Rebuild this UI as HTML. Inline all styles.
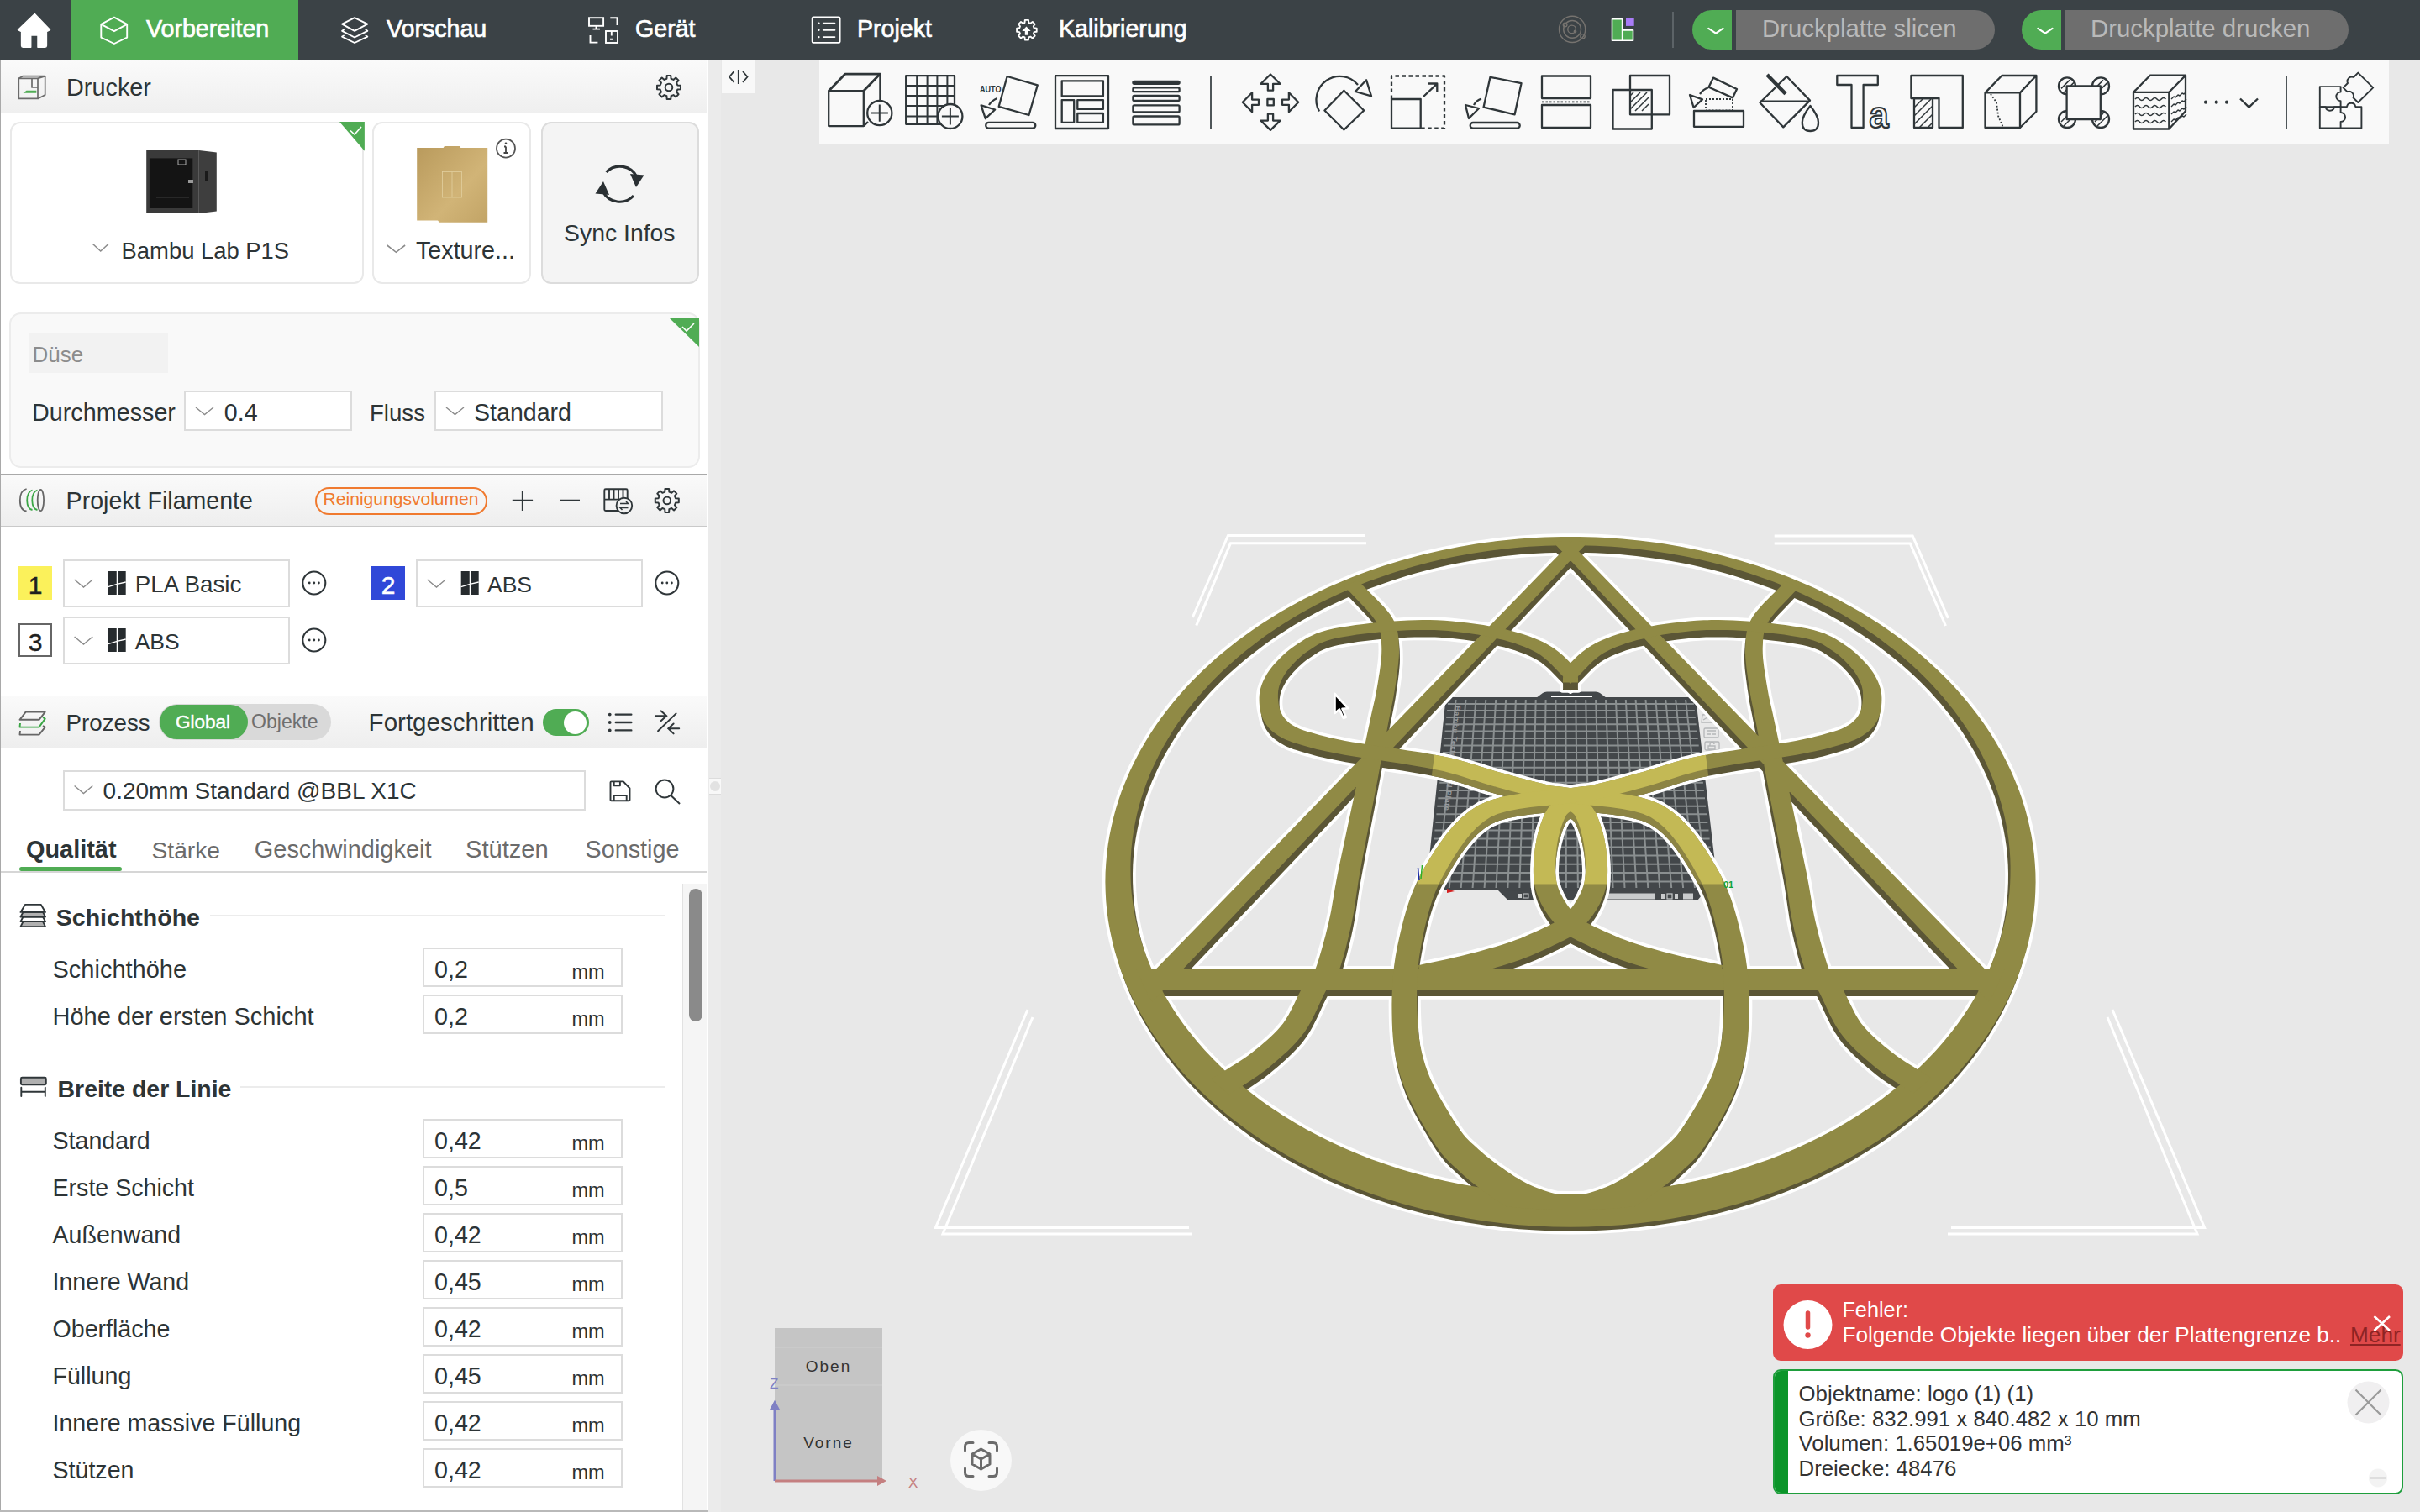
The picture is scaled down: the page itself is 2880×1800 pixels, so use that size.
<!DOCTYPE html>
<html><head><meta charset="utf-8"><style>
html,body{margin:0;padding:0;width:2880px;height:1800px;overflow:hidden;background:#e8e8e8;font-family:"Liberation Sans",sans-serif;}
.t{position:absolute;white-space:pre;-webkit-font-smoothing:antialiased;}
.r{position:absolute;}
.s{position:absolute;overflow:visible;}
</style></head><body>
<div class="r" style="left:0px;top:0px;width:2880px;height:1800px;background:#e8e8e8;"></div>
<div class="r" style="left:0px;top:0px;width:2880px;height:72px;background:#3b4246;"></div>
<div class="r" style="left:84px;top:0px;width:271px;height:72px;background:#50ac54;"></div>
<div class="t" style="left:174.0px;top:20.1px;font-size:28.6px;line-height:28.6px;color:#ffffff;font-weight:normal;-webkit-text-stroke:0.7px #ffffff;">Vorbereiten</div>
<div class="t" style="left:460.0px;top:20.1px;font-size:28.6px;line-height:28.6px;color:#ffffff;font-weight:normal;-webkit-text-stroke:0.7px #ffffff;">Vorschau</div>
<div class="t" style="left:756.0px;top:20.1px;font-size:28.6px;line-height:28.6px;color:#ffffff;font-weight:normal;-webkit-text-stroke:0.7px #ffffff;">Gerät</div>
<div class="t" style="left:1020.0px;top:20.1px;font-size:28.6px;line-height:28.6px;color:#ffffff;font-weight:normal;-webkit-text-stroke:0.7px #ffffff;">Projekt</div>
<div class="t" style="left:1260.0px;top:20.1px;font-size:28.6px;line-height:28.6px;color:#ffffff;font-weight:normal;-webkit-text-stroke:0.7px #ffffff;">Kalibrierung</div>
<div class="r" style="left:2014px;top:12px;width:80px;height:47px;background:#50ac54;border-radius:23.5px;"></div>
<div class="r" style="left:2066px;top:12px;width:308px;height:47px;background:#6e6e6e;border-radius:0 23.5px 23.5px 0;"></div>
<div class="r" style="left:2061px;top:12px;width:5px;height:47px;background:#3b4246;"></div>
<div class="t" style="left:2097.0px;top:19.0px;font-size:29.35px;line-height:29.35px;color:#b9b9b9;font-weight:normal;">Druckplatte slicen</div>
<div class="r" style="left:2406px;top:12px;width:80px;height:47px;background:#50ac54;border-radius:23.5px;"></div>
<div class="r" style="left:2458px;top:12px;width:337px;height:47px;background:#6e6e6e;border-radius:0 23.5px 23.5px 0;"></div>
<div class="r" style="left:2453px;top:12px;width:5px;height:47px;background:#3b4246;"></div>
<div class="t" style="left:2488.0px;top:18.9px;font-size:29.4px;line-height:29.4px;color:#b9b9b9;font-weight:normal;">Druckplatte drucken</div>
<div class="r" style="left:1990px;top:14px;width:2px;height:43px;background:#5c6367;"></div>
<div class="r" style="left:0px;top:72px;width:842px;height:1728px;background:#ffffff;"></div>
<div class="r" style="left:0px;top:72px;width:1px;height:1728px;background:#a9a9a9;"></div>
<div class="r" style="left:842px;top:72px;width:1px;height:1728px;background:#a3a3a3;"></div>
<div class="r" style="left:843px;top:72px;width:15px;height:1728px;background:#ebebeb;"></div>
<div class="r" style="left:844px;top:926px;width:14px;height:20px;background:#f8f8f8;"></div>
<div class="r" style="left:844px;top:926px;width:14px;height:1px;background:#dcdcdc;"></div>
<div class="r" style="left:844px;top:945px;width:14px;height:1px;background:#dcdcdc;"></div>
<div class="r" style="left:845px;top:930px;width:12px;height:12px;background:#e2e2e2;border-radius:6px;"></div>
<div class="r" style="left:1px;top:72px;width:840px;height:62px;background:linear-gradient(#fafafa,#efefef);"></div>
<div class="r" style="left:1px;top:134px;width:840px;height:1px;background:#b5b5b5;"></div>
<div class="t" style="left:79.0px;top:89.6px;font-size:28.85px;line-height:28.85px;color:#2d3436;font-weight:normal;">Drucker</div>
<div class="r" style="left:12px;top:145px;width:421px;height:193px;background:#ffffff;box-sizing:border-box;border:2px solid #e9e9e9;border-radius:12px;"></div>
<div class="r" style="left:443px;top:145px;width:189px;height:193px;background:#ffffff;box-sizing:border-box;border:2px solid #e9e9e9;border-radius:12px;"></div>
<div class="r" style="left:644px;top:145px;width:188px;height:193px;background:#f4f4f4;box-sizing:border-box;border:2px solid #dcdcdc;border-radius:12px;"></div>
<div class="t" style="left:144.6px;top:284.8px;font-size:27.4px;line-height:27.4px;color:#2d3436;font-weight:normal;">Bambu Lab P1S</div>
<div class="t" style="left:495.0px;top:283.7px;font-size:28.7px;line-height:28.7px;color:#2d3436;font-weight:normal;">Texture...</div>
<div class="t" style="left:671.0px;top:263.0px;font-size:28.4px;line-height:28.4px;color:#2d3436;font-weight:normal;">Sync Infos</div>
<div class="r" style="left:11px;top:372px;width:822px;height:185px;background:#f9f9f9;box-sizing:border-box;border:2px solid #ececec;border-radius:14px;"></div>
<div class="r" style="left:34px;top:396px;width:166px;height:48px;background:#f2f2f2;"></div>
<div class="t" style="left:38.6px;top:409.0px;font-size:26px;line-height:26px;color:#8c8c8c;font-weight:normal;">Düse</div>
<div class="t" style="left:38.0px;top:476.7px;font-size:28.76px;line-height:28.76px;color:#2d3436;font-weight:normal;">Durchmesser</div>
<div class="r" style="left:219px;top:465px;width:200px;height:48px;background:#ffffff;box-sizing:border-box;border:2px solid #dcdcdc;"></div>
<div class="t" style="left:266.8px;top:476.8px;font-size:28.6px;line-height:28.6px;color:#2d3436;font-weight:normal;">0.4</div>
<div class="t" style="left:440.0px;top:477.6px;font-size:27.6px;line-height:27.6px;color:#2d3436;font-weight:normal;">Fluss</div>
<div class="r" style="left:517px;top:465px;width:272px;height:48px;background:#ffffff;box-sizing:border-box;border:2px solid #dcdcdc;"></div>
<div class="t" style="left:564.0px;top:476.8px;font-size:28.58px;line-height:28.58px;color:#2d3436;font-weight:normal;">Standard</div>
<div class="r" style="left:1px;top:564px;width:840px;height:1px;background:#a9a9a9;"></div>
<div class="r" style="left:1px;top:565px;width:840px;height:61px;background:linear-gradient(#fafafa,#eeeeee);"></div>
<div class="r" style="left:1px;top:626px;width:840px;height:1px;background:#c9c9c9;"></div>
<div class="t" style="left:78.6px;top:581.8px;font-size:28.58px;line-height:28.58px;color:#2d3436;font-weight:normal;">Projekt Filamente</div>
<div class="r" style="left:375px;top:580px;width:205px;height:33px;background:#f4f4f4;box-sizing:border-box;border:2px solid #f07a2f;border-radius:16.5px;"></div>
<div class="t" style="left:384.6px;top:583.2px;font-size:21.06px;line-height:21.06px;color:#f07a2f;font-weight:normal;">Reinigungsvolumen</div>
<div class="r" style="left:22px;top:674px;width:40px;height:40px;background:#fbf15b;"></div>
<div class="t" style="left:-458.0px;width:1000px;text-align:center;top:681.6px;font-size:30px;line-height:30px;color:#1f1f1f;font-weight:normal;-webkit-text-stroke:0.5px #1f1f1f;">1</div>
<div class="r" style="left:75px;top:666px;width:270px;height:57px;background:#ffffff;box-sizing:border-box;border:2px solid #dcdcdc;"></div>
<div class="t" style="left:160.7px;top:682.2px;font-size:27.8px;line-height:27.8px;color:#2d3436;font-weight:normal;">PLA Basic</div>
<div class="r" style="left:442px;top:674px;width:40px;height:40px;background:#3048d8;"></div>
<div class="t" style="left:-38.0px;width:1000px;text-align:center;top:681.6px;font-size:30px;line-height:30px;color:#ffffff;font-weight:normal;-webkit-text-stroke:0.5px #ffffff;">2</div>
<div class="r" style="left:495px;top:666px;width:270px;height:57px;background:#ffffff;box-sizing:border-box;border:2px solid #dcdcdc;"></div>
<div class="t" style="left:580.0px;top:683.3px;font-size:26.5px;line-height:26.5px;color:#2d3436;font-weight:normal;">ABS</div>
<div class="r" style="left:22px;top:742px;width:40px;height:40px;background:#ffffff;box-sizing:border-box;border:2px solid #666666;"></div>
<div class="t" style="left:-458.0px;width:1000px;text-align:center;top:749.6px;font-size:30px;line-height:30px;color:#1f1f1f;font-weight:normal;-webkit-text-stroke:0.5px #1f1f1f;">3</div>
<div class="r" style="left:75px;top:734px;width:270px;height:57px;background:#ffffff;box-sizing:border-box;border:2px solid #dcdcdc;"></div>
<div class="t" style="left:160.7px;top:751.3px;font-size:26.5px;line-height:26.5px;color:#2d3436;font-weight:normal;">ABS</div>
<div class="r" style="left:1px;top:828px;width:840px;height:1px;background:#a9a9a9;"></div>
<div class="r" style="left:1px;top:829px;width:840px;height:61px;background:linear-gradient(#fafafa,#eeeeee);"></div>
<div class="r" style="left:1px;top:890px;width:840px;height:1px;background:#c9c9c9;"></div>
<div class="t" style="left:78.6px;top:846.6px;font-size:27.7px;line-height:27.7px;color:#2d3436;font-weight:normal;">Prozess</div>
<div class="r" style="left:188.6px;top:838px;width:205.4px;height:43px;background:#d9d9d9;border-radius:21.5px;"></div>
<div class="r" style="left:190px;top:839px;width:105px;height:41px;background:#50ac54;border-radius:20.5px;"></div>
<div class="t" style="left:209.0px;top:849.0px;font-size:22.5px;line-height:22.5px;color:#ffffff;font-weight:normal;-webkit-text-stroke:0.5px #ffffff;">Global</div>
<div class="t" style="left:299.0px;top:848.4px;font-size:23.1px;line-height:23.1px;color:#6f6f6f;font-weight:normal;">Objekte</div>
<div class="t" style="left:438.6px;top:845.0px;font-size:29.56px;line-height:29.56px;color:#2d3436;font-weight:normal;">Fortgeschritten</div>
<div class="r" style="left:645.7px;top:844px;width:55px;height:32px;background:#50ac54;border-radius:16px;"></div>
<div class="r" style="left:671px;top:847px;width:27px;height:27px;background:#ffffff;border-radius:13.5px;"></div>
<div class="r" style="left:75px;top:917px;width:622px;height:48px;background:#ffffff;box-sizing:border-box;border:2px solid #dcdcdc;"></div>
<div class="t" style="left:122.6px;top:928.3px;font-size:28.02px;line-height:28.02px;color:#2d3436;font-weight:normal;">0.20mm Standard @BBL X1C</div>
<div class="t" style="left:31.0px;top:996.9px;font-size:28.9px;line-height:28.9px;color:#2d3436;font-weight:bold;">Qualität</div>
<div class="t" style="left:180.5px;top:997.5px;font-size:28.2px;line-height:28.2px;color:#6b6b6b;font-weight:normal;">Stärke</div>
<div class="t" style="left:302.8px;top:996.9px;font-size:28.94px;line-height:28.94px;color:#6b6b6b;font-weight:normal;">Geschwindigkeit</div>
<div class="t" style="left:554.0px;top:996.7px;font-size:29.14px;line-height:29.14px;color:#6b6b6b;font-weight:normal;">Stützen</div>
<div class="t" style="left:696.5px;top:997.0px;font-size:28.78px;line-height:28.78px;color:#6b6b6b;font-weight:normal;">Sonstige</div>
<div class="r" style="left:23px;top:1032px;width:122px;height:5px;background:#50ac54;border-radius:2.5px;"></div>
<div class="r" style="left:1px;top:1037px;width:840px;height:2px;background:#d6d6d6;"></div>
<div class="r" style="left:812px;top:1052px;width:29px;height:748px;background:#f5f5f5;"></div>
<div class="r" style="left:812px;top:1052px;width:1px;height:748px;background:#e2e2e2;"></div>
<div class="r" style="left:820px;top:1058px;width:16px;height:158px;background:#8a8a8a;border-radius:8px;"></div>
<div class="t" style="left:66.8px;top:1077.8px;font-size:28.53px;line-height:28.53px;color:#2d3436;font-weight:bold;">Schichthöhe</div>
<div class="r" style="left:250px;top:1089px;width:542px;height:2px;background:#ececec;"></div>
<div class="t" style="left:62.5px;top:1139.5px;font-size:29.0px;line-height:29.0px;color:#2d3436;font-weight:normal;">Schichthöhe</div>
<div class="r" style="left:503px;top:1128px;width:238px;height:47px;background:#ffffff;box-sizing:border-box;border:2px solid #dcdcdc;"></div>
<div class="t" style="left:517.0px;top:1139.7px;font-size:28.67px;line-height:28.67px;color:#2d3436;font-weight:normal;">0,2</div>
<div class="t" style="left:680.5px;top:1146.1px;font-size:23.5px;line-height:23.5px;color:#2d3436;font-weight:normal;">mm</div>
<div class="t" style="left:62.5px;top:1195.5px;font-size:29.0px;line-height:29.0px;color:#2d3436;font-weight:normal;">Höhe der ersten Schicht</div>
<div class="r" style="left:503px;top:1184px;width:238px;height:47px;background:#ffffff;box-sizing:border-box;border:2px solid #dcdcdc;"></div>
<div class="t" style="left:517.0px;top:1195.7px;font-size:28.67px;line-height:28.67px;color:#2d3436;font-weight:normal;">0,2</div>
<div class="t" style="left:680.5px;top:1202.1px;font-size:23.5px;line-height:23.5px;color:#2d3436;font-weight:normal;">mm</div>
<div class="t" style="left:68.6px;top:1281.7px;font-size:28.41px;line-height:28.41px;color:#2d3436;font-weight:bold;">Breite der Linie</div>
<div class="r" style="left:286px;top:1293px;width:506px;height:2px;background:#ececec;"></div>
<div class="t" style="left:62.5px;top:1343.8px;font-size:28.6px;line-height:28.6px;color:#2d3436;font-weight:normal;">Standard</div>
<div class="r" style="left:503px;top:1332px;width:238px;height:47px;background:#ffffff;box-sizing:border-box;border:2px solid #dcdcdc;"></div>
<div class="t" style="left:517.0px;top:1343.7px;font-size:28.67px;line-height:28.67px;color:#2d3436;font-weight:normal;">0,42</div>
<div class="t" style="left:680.5px;top:1350.1px;font-size:23.5px;line-height:23.5px;color:#2d3436;font-weight:normal;">mm</div>
<div class="t" style="left:62.5px;top:1399.8px;font-size:28.6px;line-height:28.6px;color:#2d3436;font-weight:normal;">Erste Schicht</div>
<div class="r" style="left:503px;top:1388px;width:238px;height:47px;background:#ffffff;box-sizing:border-box;border:2px solid #dcdcdc;"></div>
<div class="t" style="left:517.0px;top:1399.7px;font-size:28.67px;line-height:28.67px;color:#2d3436;font-weight:normal;">0,5</div>
<div class="t" style="left:680.5px;top:1406.1px;font-size:23.5px;line-height:23.5px;color:#2d3436;font-weight:normal;">mm</div>
<div class="t" style="left:62.5px;top:1455.8px;font-size:28.6px;line-height:28.6px;color:#2d3436;font-weight:normal;">Außenwand</div>
<div class="r" style="left:503px;top:1444px;width:238px;height:47px;background:#ffffff;box-sizing:border-box;border:2px solid #dcdcdc;"></div>
<div class="t" style="left:517.0px;top:1455.7px;font-size:28.67px;line-height:28.67px;color:#2d3436;font-weight:normal;">0,42</div>
<div class="t" style="left:680.5px;top:1462.1px;font-size:23.5px;line-height:23.5px;color:#2d3436;font-weight:normal;">mm</div>
<div class="t" style="left:62.5px;top:1511.8px;font-size:28.6px;line-height:28.6px;color:#2d3436;font-weight:normal;">Innere Wand</div>
<div class="r" style="left:503px;top:1500px;width:238px;height:47px;background:#ffffff;box-sizing:border-box;border:2px solid #dcdcdc;"></div>
<div class="t" style="left:517.0px;top:1511.7px;font-size:28.67px;line-height:28.67px;color:#2d3436;font-weight:normal;">0,45</div>
<div class="t" style="left:680.5px;top:1518.1px;font-size:23.5px;line-height:23.5px;color:#2d3436;font-weight:normal;">mm</div>
<div class="t" style="left:62.5px;top:1567.8px;font-size:28.6px;line-height:28.6px;color:#2d3436;font-weight:normal;">Oberfläche</div>
<div class="r" style="left:503px;top:1556px;width:238px;height:47px;background:#ffffff;box-sizing:border-box;border:2px solid #dcdcdc;"></div>
<div class="t" style="left:517.0px;top:1567.7px;font-size:28.67px;line-height:28.67px;color:#2d3436;font-weight:normal;">0,42</div>
<div class="t" style="left:680.5px;top:1574.1px;font-size:23.5px;line-height:23.5px;color:#2d3436;font-weight:normal;">mm</div>
<div class="t" style="left:62.5px;top:1623.8px;font-size:28.6px;line-height:28.6px;color:#2d3436;font-weight:normal;">Füllung</div>
<div class="r" style="left:503px;top:1612px;width:238px;height:47px;background:#ffffff;box-sizing:border-box;border:2px solid #dcdcdc;"></div>
<div class="t" style="left:517.0px;top:1623.7px;font-size:28.67px;line-height:28.67px;color:#2d3436;font-weight:normal;">0,45</div>
<div class="t" style="left:680.5px;top:1630.1px;font-size:23.5px;line-height:23.5px;color:#2d3436;font-weight:normal;">mm</div>
<div class="t" style="left:62.5px;top:1679.8px;font-size:28.6px;line-height:28.6px;color:#2d3436;font-weight:normal;">Innere massive Füllung</div>
<div class="r" style="left:503px;top:1668px;width:238px;height:47px;background:#ffffff;box-sizing:border-box;border:2px solid #dcdcdc;"></div>
<div class="t" style="left:517.0px;top:1679.7px;font-size:28.67px;line-height:28.67px;color:#2d3436;font-weight:normal;">0,42</div>
<div class="t" style="left:680.5px;top:1686.1px;font-size:23.5px;line-height:23.5px;color:#2d3436;font-weight:normal;">mm</div>
<div class="t" style="left:62.5px;top:1735.8px;font-size:28.6px;line-height:28.6px;color:#2d3436;font-weight:normal;">Stützen</div>
<div class="r" style="left:503px;top:1724px;width:238px;height:47px;background:#ffffff;box-sizing:border-box;border:2px solid #dcdcdc;"></div>
<div class="t" style="left:517.0px;top:1735.7px;font-size:28.67px;line-height:28.67px;color:#2d3436;font-weight:normal;">0,42</div>
<div class="t" style="left:680.5px;top:1742.1px;font-size:23.5px;line-height:23.5px;color:#2d3436;font-weight:normal;">mm</div>
<div class="r" style="left:0px;top:1798px;width:842px;height:2px;background:#b9b9b9;"></div>
<svg class="s" style="left:0px;top:0px;" width="2880" height="1800" viewBox="0 0 2880 1800"><polyline points="1419.3,735 1461.5,637.5 1624.5,637.5" fill="none" stroke="#ffffff" stroke-width="3"/>
<polyline points="1423.7,744.6 1464.4,646.8 1626,646.8" fill="none" stroke="#ffffff" stroke-width="3"/>
<polyline points="2111.7,638 2276.2,638 2318.4,735.8" fill="none" stroke="#ffffff" stroke-width="3"/>
<polyline points="2111.7,647 2273.3,647 2315.5,745" fill="none" stroke="#ffffff" stroke-width="3"/>
<polyline points="1223,1202 1113.4,1461.5 1415,1461.5" fill="none" stroke="#ffffff" stroke-width="3"/>
<polyline points="1229,1211 1122,1469 1419,1469" fill="none" stroke="#ffffff" stroke-width="3"/>
<polyline points="2514,1202 2623.6,1461.5 2322,1461.5" fill="none" stroke="#ffffff" stroke-width="3"/>
<polyline points="2508,1211 2615,1469 2318,1469" fill="none" stroke="#ffffff" stroke-width="3"/>
<path d="M1828,831 L1836,825 Q1838,823.5 1841,823.5 H1899 Q1902,823.5 1904,825 L1912,831Z" fill="#43474a"/><path d="M1846,829.3 H1895" stroke="#ffffff" stroke-width="1.6"/>
<path d="M1783,1060 L1795,1072 L2020,1072 L2030,1060Z" fill="#43474a"/>
<polygon points="1720.7,830 2018,830 2044.8,1060.4 1697,1060" fill="#43474a"/>
<path d="M1732.6 833L1710.9 1057M1744.5 833L1724.8 1057M1756.4 833L1738.7 1057M1768.3 833L1752.6 1057M1780.2 833L1766.6 1057M1792.1 833L1780.5 1057M1803.9 833L1794.4 1057M1815.8 833L1808.3 1057M1827.7 833L1822.2 1057M1839.6 833L1836.1 1057M1851.5 833L1850.0 1057M1863.4 833L1863.9 1057M1875.3 833L1877.9 1057M1887.2 833L1891.8 1057M1899.1 833L1905.7 1057M1911.0 833L1919.6 1057M1922.9 833L1933.5 1057M1934.8 833L1947.4 1057M1946.6 833L1961.3 1057M1958.5 833L1975.2 1057M1970.4 833L1989.2 1057M1982.3 833L2003.1 1057M1994.2 833L2017.0 1057M2006.1 833L2030.9 1057M1722.9 837.9L2015.9 837.9M1722.1 845.9L2016.8 845.9M1721.2 854.0L2017.8 854.0M1720.4 862.2L2018.7 862.2M1719.5 870.5L2019.7 870.5M1718.7 878.9L2020.7 878.9M1717.8 887.4L2021.7 887.4M1716.9 896.1L2022.7 896.1M1716.0 904.9L2023.7 904.9M1715.1 913.7L2024.8 913.7M1714.1 922.7L2025.8 922.7M1713.2 931.8L2026.9 931.8M1712.3 941.0L2027.9 941.0M1711.3 950.3L2029.0 950.3M1710.3 959.7L2030.1 959.7M1709.4 969.3L2031.2 969.3M1708.4 978.9L2032.3 978.9M1707.4 988.6L2033.5 988.6M1706.3 998.5L2034.6 998.5M1705.3 1008.5L2035.8 1008.5M1704.3 1018.6L2037.0 1018.6M1703.2 1028.8L2038.2 1028.8M1702.2 1039.1L2039.4 1039.1M1701.1 1049.5L2040.6 1049.5" stroke="#8a8f90" stroke-width="2" fill="none"/>
<g fill="none" stroke="#b4b6b8" stroke-width="1.3"><path d="M2024,838 h8 v6"/><path d="M2026,851 l14,-1 v10 h-15 Z M2027,857 l5,-3"/><rect x="2028" y="867" width="17" height="11" rx="1.5"/><path d="M2031,870 h11 M2031,874 h5 M2038,874 h4"/><rect x="2029" y="883" width="17" height="10" rx="1.5"/><path d="M2033,888 h8 v4 h-8 Z M2035,888 v-2 a2.5,2.5 0 0 1 5,0"/></g>
<rect x="1910" y="1062" width="107" height="10" fill="#43474a"/><rect x="1912" y="1063.5" width="58" height="7" fill="#c9cbcc"/><g fill="#c9cbcc"><rect x="1977" y="1064" width="4" height="6"/><rect x="1984" y="1064" width="6" height="6" fill="none" stroke="#c9cbcc" stroke-width="1.2"/><rect x="1993" y="1064" width="4" height="6"/><rect x="2003" y="1063.5" width="12" height="7"/></g>
<g fill="#c9cbcc"><rect x="1806" y="1064" width="5" height="5"/><rect x="1813" y="1064" width="6" height="5" fill="none" stroke="#c9cbcc" stroke-width="1"/></g>
<text transform="translate(1732,840) rotate(96)" font-family="Liberation Sans" font-weight="bold" font-size="9" fill="#9a9c9e" letter-spacing="0.6">Bambu Textured PEI Plate</text>
<path d="M1701,827 L1705,822 M1700,828 L1708,828" stroke="#5ec48a" stroke-width="1"/>
<defs><clipPath id="bedclip"><path d="M1709,884 L2028,884 L2050,1052.5 L1687,1052.5Z"/></clipPath>
<clipPath id="ringclip"><path d="M2377.9 912.9 2382.0 922.3 2385.9 931.9 2389.6 941.6 2392.9 951.4 2395.8 961.4 2398.5 971.6 2400.8 981.9 2402.8 992.3 2404.4 1002.8 2405.7 1013.5 2406.5 1024.3 2407.0 1035.2 2407.0 1046.2 2406.7 1057.3 2405.9 1068.5 2404.7 1079.8 2403.0 1091.1 2400.9 1102.5 2398.3 1114.0 2395.2 1125.5 2391.6 1137.0 2387.5 1148.5 2383.0 1160.1 2377.9 1171.6 2372.3 1183.1 2366.1 1194.6 2359.5 1206.0 2352.2 1217.4 2344.5 1228.6 2336.2 1239.8 2327.3 1250.9 2317.9 1261.8 2308.0 1272.5 2297.4 1283.1 2286.4 1293.5 2274.8 1303.7 2262.7 1313.7 2250.0 1323.4 2236.8 1332.9 2223.1 1342.1 2208.9 1350.9 2194.2 1359.5 2179.0 1367.7 2163.4 1375.5 2147.3 1383.0 2130.8 1390.1 2113.9 1396.8 2096.6 1403.0 2078.9 1408.9 2061.0 1414.2 2042.7 1419.1 2024.1 1423.5 2005.3 1427.4 1986.2 1430.8 1967.0 1433.8 1947.6 1436.1 1928.1 1438.0 1908.4 1439.3 1888.7 1440.1 1869.0 1440.4 1849.3 1440.1 1829.6 1439.3 1809.9 1438.0 1790.4 1436.1 1771.0 1433.8 1751.8 1430.8 1732.7 1427.4 1713.9 1423.5 1695.3 1419.1 1677.0 1414.2 1659.1 1408.9 1641.4 1403.0 1624.1 1396.8 1607.2 1390.1 1590.7 1383.0 1574.6 1375.5 1559.0 1367.7 1543.8 1359.5 1529.1 1350.9 1514.9 1342.1 1501.2 1332.9 1488.0 1323.4 1475.3 1313.7 1463.2 1303.7 1451.6 1293.5 1440.6 1283.1 1430.0 1272.5 1420.1 1261.8 1410.7 1250.9 1401.8 1239.8 1393.5 1228.6 1385.8 1217.4 1378.5 1206.0 1371.9 1194.6 1365.7 1183.1 1360.1 1171.6 1355.0 1160.1 1350.5 1148.5 1346.4 1137.0 1342.8 1125.5 1339.7 1114.0 1337.1 1102.5 1335.0 1091.1 1333.3 1079.8 1332.1 1068.5 1331.3 1057.3 1331.0 1046.2 1331.0 1035.2 1331.5 1024.3 1332.3 1013.5 1333.6 1002.8 1335.2 992.3 1337.2 981.9 1339.5 971.6 1342.2 961.4 1345.1 951.4 1348.4 941.6 1352.1 931.9 1356.0 922.3 1360.1 912.9 1364.6 903.7 1369.3 894.6 1374.3 885.7 1379.6 876.9 1385.0 868.3 1390.7 859.9 1396.6 851.6 1402.8 843.6 1409.1 835.6 1415.6 827.9 1422.3 820.3 1429.2 812.9 1436.3 805.7 1443.5 798.6 1450.9 791.7 1458.4 785.0 1466.1 778.4 1473.9 772.0 1481.8 765.8 1489.9 759.8 1498.1 753.9 1506.4 748.1 1514.8 742.6 1523.4 737.2 1532.0 731.9 1540.7 726.9 1549.5 722.0 1558.4 717.2 1567.4 712.6 1576.4 708.2 1585.6 703.9 1594.7 699.8 1604.0 695.8 1613.3 692.0 1622.7 688.3 1632.2 684.8 1641.7 681.4 1651.2 678.2 1660.8 675.2 1670.5 672.3 1680.1 669.5 1689.9 666.9 1699.6 664.4 1709.4 662.1 1719.2 659.9 1729.1 657.9 1739.0 656.0 1748.9 654.2 1758.8 652.6 1768.8 651.1 1778.7 649.8 1788.7 648.6 1798.7 647.6 1808.7 646.7 1818.8 645.9 1828.8 645.3 1838.8 644.8 1848.9 644.4 1858.9 644.2 1869.0 644.2 1879.1 644.2 1889.1 644.4 1899.2 644.8 1909.2 645.3 1919.2 645.9 1929.3 646.7 1939.3 647.6 1949.3 648.6 1959.3 649.8 1969.2 651.1 1979.2 652.6 1989.1 654.2 1999.0 656.0 2008.9 657.9 2018.8 659.9 2028.6 662.1 2038.4 664.4 2048.1 666.9 2057.9 669.5 2067.5 672.3 2077.2 675.2 2086.8 678.2 2096.3 681.4 2105.8 684.8 2115.3 688.3 2124.7 692.0 2134.0 695.8 2143.3 699.8 2152.4 703.9 2161.6 708.2 2170.6 712.6 2179.6 717.2 2188.5 722.0 2197.3 726.9 2206.0 731.9 2214.6 737.2 2223.2 742.6 2231.6 748.1 2239.9 753.9 2248.1 759.8 2256.2 765.8 2264.1 772.0 2271.9 778.4 2279.6 785.0 2287.1 791.7 2294.5 798.6 2301.7 805.7 2308.8 812.9 2315.7 820.3 2322.4 827.9 2328.9 835.6 2335.2 843.6 2341.4 851.6 2347.3 859.9 2353.0 868.3 2358.4 876.9 2363.7 885.7 2368.7 894.6 2373.4 903.7Z"/></clipPath>
<clipPath id="clipL" clip-path="url(#ringclip)"><path d="M0,0 H1869.7 V880 H2880 V1800 H0Z"/></clipPath>
<clipPath id="clipR" clip-path="url(#ringclip)"><path d="M0,880 H1868.3 V0 H2880 V1800 H0Z"/></clipPath>
<path id="rt" d="M2390.9 912.9 2395.3 922.5 2399.4 932.4 2403.3 942.3 2406.8 952.5 2410.0 962.7 2412.8 973.2 2415.3 983.8 2417.5 994.5 2419.3 1005.3 2420.7 1016.3 2421.7 1027.5 2422.4 1038.7 2422.6 1050.1 2422.3 1061.5 2421.7 1073.1 2420.6 1084.7 2419.0 1096.5 2416.9 1108.3 2414.4 1120.1 2411.4 1132.0 2407.8 1144.0 2403.8 1155.9 2399.2 1167.9 2394.1 1179.9 2388.5 1191.8 2382.3 1203.7 2375.5 1215.6 2368.2 1227.4 2360.3 1239.1 2351.8 1250.8 2342.8 1262.3 2333.2 1273.7 2323.0 1284.9 2312.3 1295.9 2300.9 1306.8 2289.0 1317.4 2276.6 1327.9 2263.5 1338.0 2250.0 1347.9 2235.9 1357.5 2221.2 1366.8 2206.0 1375.8 2190.4 1384.4 2174.2 1392.6 2157.6 1400.4 2140.5 1407.9 2123.0 1414.9 2105.1 1421.4 2086.9 1427.5 2068.2 1433.2 2049.3 1438.3 2030.0 1442.9 2010.5 1447.1 1990.7 1450.6 1970.7 1453.7 1950.6 1456.2 1930.3 1458.2 1909.9 1459.6 1889.5 1460.4 1869.0 1460.7 1848.5 1460.4 1828.1 1459.6 1807.7 1458.2 1787.4 1456.2 1767.3 1453.7 1747.3 1450.6 1727.5 1447.1 1708.0 1442.9 1688.7 1438.3 1669.8 1433.2 1651.1 1427.5 1632.9 1421.4 1615.0 1414.9 1597.5 1407.9 1580.4 1400.4 1563.8 1392.6 1547.6 1384.4 1532.0 1375.8 1516.8 1366.8 1502.1 1357.5 1488.0 1347.9 1474.5 1338.0 1461.4 1327.9 1449.0 1317.4 1437.1 1306.8 1425.7 1295.9 1415.0 1284.9 1404.8 1273.7 1395.2 1262.3 1386.2 1250.8 1377.7 1239.1 1369.8 1227.4 1362.5 1215.6 1355.7 1203.7 1349.5 1191.8 1343.9 1179.9 1338.8 1167.9 1334.2 1155.9 1330.2 1144.0 1326.6 1132.0 1323.6 1120.1 1321.1 1108.3 1319.0 1096.5 1317.4 1084.7 1316.3 1073.1 1315.7 1061.5 1315.4 1050.1 1315.6 1038.7 1316.3 1027.5 1317.3 1016.3 1318.7 1005.3 1320.5 994.5 1322.7 983.8 1325.2 973.2 1328.0 962.7 1331.2 952.5 1334.7 942.3 1338.6 932.4 1342.7 922.5 1347.1 912.9 1351.8 903.4 1356.8 894.1 1362.0 885.0 1367.4 876.0 1373.1 867.2 1379.1 858.6 1385.2 850.2 1391.6 841.9 1398.2 833.8 1404.9 825.9 1411.9 818.1 1419.0 810.6 1426.3 803.2 1433.8 796.0 1441.4 789.0 1449.1 782.1 1457.1 775.4 1465.1 768.9 1473.3 762.6 1481.6 756.4 1490.0 750.4 1498.6 744.6 1507.2 738.9 1515.9 733.4 1524.8 728.1 1533.7 722.9 1542.8 717.9 1551.9 713.1 1561.1 708.4 1570.4 703.9 1579.7 699.6 1589.1 695.4 1598.6 691.4 1608.1 687.5 1617.7 683.8 1627.4 680.2 1637.1 676.8 1646.9 673.5 1656.7 670.4 1666.5 667.5 1676.4 664.7 1686.3 662.0 1696.3 659.5 1706.3 657.2 1716.3 654.9 1726.4 652.9 1736.4 651.0 1746.5 649.2 1756.7 647.5 1766.8 646.1 1777.0 644.7 1787.2 643.5 1797.4 642.5 1807.6 641.5 1817.8 640.8 1828.0 640.1 1838.3 639.6 1848.5 639.3 1858.8 639.1 1869.0 639.0 1879.2 639.1 1889.5 639.3 1899.7 639.6 1910.0 640.1 1920.2 640.8 1930.4 641.5 1940.6 642.5 1950.8 643.5 1961.0 644.7 1971.2 646.1 1981.3 647.5 1991.5 649.2 2001.6 651.0 2011.6 652.9 2021.7 654.9 2031.7 657.2 2041.7 659.5 2051.7 662.0 2061.6 664.7 2071.5 667.5 2081.3 670.4 2091.1 673.5 2100.9 676.8 2110.6 680.2 2120.3 683.8 2129.9 687.5 2139.4 691.4 2148.9 695.4 2158.3 699.6 2167.6 703.9 2176.9 708.4 2186.1 713.1 2195.2 717.9 2204.3 722.9 2213.2 728.1 2222.1 733.4 2230.8 738.9 2239.4 744.6 2248.0 750.4 2256.4 756.4 2264.7 762.6 2272.9 768.9 2280.9 775.4 2288.9 782.1 2296.6 789.0 2304.2 796.0 2311.7 803.2 2319.0 810.6 2326.1 818.1 2333.1 825.9 2339.8 833.8 2346.4 841.9 2352.8 850.2 2358.9 858.6 2364.9 867.2 2370.6 876.0 2376.0 885.0 2381.2 894.1 2386.2 903.4Z M2365.6 912.9 2369.6 922.1 2373.3 931.4 2376.7 940.9 2379.8 950.5 2382.6 960.2 2385.1 970.1 2387.2 980.1 2389.0 990.2 2390.5 1000.5 2391.6 1010.9 2392.3 1021.4 2392.6 1031.9 2392.5 1042.6 2392.1 1053.4 2391.2 1064.2 2389.8 1075.2 2388.1 1086.2 2385.9 1097.2 2383.2 1108.3 2380.1 1119.4 2376.5 1130.5 2372.4 1141.7 2367.9 1152.8 2362.8 1164.0 2357.2 1175.1 2351.2 1186.1 2344.6 1197.1 2337.5 1208.1 2329.8 1218.9 2321.7 1229.6 2313.0 1240.3 2303.8 1250.8 2294.0 1261.1 2283.7 1271.3 2272.9 1281.3 2261.6 1291.1 2249.8 1300.6 2237.5 1309.9 2224.6 1319.0 2211.3 1327.8 2197.5 1336.3 2183.3 1344.5 2168.5 1352.3 2153.4 1359.8 2137.8 1367.0 2121.8 1373.8 2105.5 1380.2 2088.7 1386.1 2071.7 1391.7 2054.3 1396.8 2036.6 1401.5 2018.7 1405.7 2000.5 1409.4 1982.1 1412.7 1963.5 1415.4 1944.8 1417.7 1926.0 1419.5 1907.0 1420.8 1888.0 1421.5 1869.0 1421.8 1850.0 1421.5 1831.0 1420.8 1812.0 1419.5 1793.2 1417.7 1774.5 1415.4 1755.9 1412.7 1737.5 1409.4 1719.3 1405.7 1701.4 1401.5 1683.7 1396.8 1666.3 1391.7 1649.3 1386.1 1632.5 1380.2 1616.2 1373.8 1600.2 1367.0 1584.6 1359.8 1569.5 1352.3 1554.7 1344.5 1540.5 1336.3 1526.7 1327.8 1513.4 1319.0 1500.5 1309.9 1488.2 1300.6 1476.4 1291.1 1465.1 1281.3 1454.3 1271.3 1444.0 1261.1 1434.2 1250.8 1425.0 1240.3 1416.3 1229.6 1408.2 1218.9 1400.5 1208.1 1393.4 1197.1 1386.8 1186.1 1380.8 1175.1 1375.2 1164.0 1370.1 1152.8 1365.6 1141.7 1361.5 1130.5 1357.9 1119.4 1354.8 1108.3 1352.1 1097.2 1349.9 1086.2 1348.2 1075.2 1346.8 1064.2 1345.9 1053.4 1345.5 1042.6 1345.4 1031.9 1345.7 1021.4 1346.4 1010.9 1347.5 1000.5 1349.0 990.2 1350.8 980.1 1352.9 970.1 1355.4 960.2 1358.2 950.5 1361.3 940.9 1364.7 931.4 1368.4 922.1 1372.4 912.9 1376.7 903.9 1381.2 895.0 1386.0 886.3 1391.0 877.7 1396.2 869.3 1401.7 861.1 1407.4 853.0 1413.3 845.1 1419.4 837.4 1425.7 829.8 1432.2 822.4 1438.9 815.1 1445.7 808.0 1452.7 801.1 1459.9 794.3 1467.2 787.7 1474.6 781.3 1482.2 775.0 1490.0 768.9 1497.8 762.9 1505.8 757.1 1513.9 751.5 1522.1 746.1 1530.4 740.7 1538.8 735.6 1547.3 730.6 1555.9 725.8 1564.6 721.1 1573.3 716.6 1582.2 712.2 1591.1 708.0 1600.1 703.9 1609.2 700.0 1618.3 696.3 1627.5 692.6 1636.7 689.2 1646.0 685.9 1655.4 682.7 1664.8 679.7 1674.2 676.8 1683.7 674.1 1693.2 671.5 1702.8 669.1 1712.4 666.8 1722.0 664.6 1731.7 662.6 1741.4 660.7 1751.1 659.0 1760.9 657.4 1770.6 656.0 1780.4 654.7 1790.2 653.5 1800.0 652.5 1809.8 651.6 1819.7 650.8 1829.5 650.2 1839.4 649.7 1849.3 649.4 1859.1 649.2 1869.0 649.1 1878.9 649.2 1888.7 649.4 1898.6 649.7 1908.5 650.2 1918.3 650.8 1928.2 651.6 1938.0 652.5 1947.8 653.5 1957.6 654.7 1967.4 656.0 1977.1 657.4 1986.9 659.0 1996.6 660.7 2006.3 662.6 2016.0 664.6 2025.6 666.8 2035.2 669.1 2044.8 671.5 2054.3 674.1 2063.8 676.8 2073.2 679.7 2082.6 682.7 2092.0 685.9 2101.3 689.2 2110.5 692.6 2119.7 696.3 2128.8 700.0 2137.9 703.9 2146.9 708.0 2155.8 712.2 2164.7 716.6 2173.4 721.1 2182.1 725.8 2190.7 730.6 2199.2 735.6 2207.6 740.7 2215.9 746.1 2224.1 751.5 2232.2 757.1 2240.2 762.9 2248.0 768.9 2255.8 775.0 2263.4 781.3 2270.8 787.7 2278.1 794.3 2285.3 801.1 2292.3 808.0 2299.1 815.1 2305.8 822.4 2312.3 829.8 2318.6 837.4 2324.7 845.1 2330.6 853.0 2336.3 861.1 2341.8 869.3 2347.0 877.7 2352.0 886.3 2356.8 895.0 2361.3 903.9Z" fill-rule="evenodd"/><path id="rs" d="M2388.3 921.4 2392.7 931.0 2396.8 940.8 2400.6 950.8 2404.1 960.9 2407.3 971.2 2410.1 981.6 2412.6 992.1 2414.8 1002.8 2416.6 1013.7 2418.0 1024.6 2419.0 1035.7 2419.6 1046.9 2419.8 1058.2 2419.6 1069.6 2418.9 1081.1 2417.8 1092.7 2416.2 1104.3 2414.2 1116.0 2411.7 1127.8 2408.7 1139.6 2405.1 1151.5 2401.1 1163.4 2396.6 1175.3 2391.5 1187.2 2385.9 1199.0 2379.7 1210.9 2373.0 1222.6 2365.7 1234.4 2357.8 1246.0 2349.4 1257.5 2340.4 1268.9 2330.9 1280.2 2320.8 1291.4 2310.1 1302.3 2298.8 1313.1 2286.9 1323.7 2274.5 1334.0 2261.6 1344.1 2248.1 1353.9 2234.0 1363.4 2219.4 1372.6 2204.4 1381.5 2188.8 1390.0 2172.7 1398.2 2156.2 1406.0 2139.2 1413.3 2121.8 1420.3 2104.0 1426.8 2085.8 1432.8 2067.2 1438.4 2048.4 1443.5 2029.2 1448.1 2009.8 1452.2 1990.1 1455.7 1970.2 1458.8 1950.2 1461.2 1930.0 1463.2 1909.7 1464.6 1889.4 1465.4 1869.0 1465.7 1848.6 1465.4 1828.3 1464.6 1808.0 1463.2 1787.8 1461.2 1767.8 1458.8 1747.9 1455.7 1728.2 1452.2 1708.8 1448.1 1689.6 1443.5 1670.8 1438.4 1652.2 1432.8 1634.0 1426.8 1616.2 1420.3 1598.8 1413.3 1581.8 1406.0 1565.3 1398.2 1549.2 1390.0 1533.6 1381.5 1518.6 1372.6 1504.0 1363.4 1489.9 1353.9 1476.4 1344.1 1463.5 1334.0 1451.1 1323.7 1439.2 1313.1 1427.9 1302.3 1417.2 1291.4 1407.1 1280.2 1397.6 1268.9 1388.6 1257.5 1380.2 1246.0 1372.3 1234.4 1365.0 1222.6 1358.3 1210.9 1352.1 1199.0 1346.5 1187.2 1341.4 1175.3 1336.9 1163.4 1332.9 1151.5 1329.3 1139.6 1326.3 1127.8 1323.8 1116.0 1321.8 1104.3 1320.2 1092.7 1319.1 1081.1 1318.4 1069.6 1318.2 1058.2 1318.4 1046.9 1319.0 1035.7 1320.0 1024.6 1321.4 1013.7 1323.2 1002.8 1325.4 992.1 1327.9 981.6 1330.7 971.2 1333.9 960.9 1337.4 950.8 1341.2 940.8 1345.3 931.0 1349.7 921.4 1354.4 911.9 1359.3 902.6 1364.5 893.5 1369.9 884.5 1375.6 875.7 1381.5 867.1 1387.6 858.7 1394.0 850.4 1400.5 842.3 1407.2 834.4 1414.2 826.6 1421.2 819.1 1428.5 811.7 1435.9 804.5 1443.5 797.5 1451.2 790.6 1459.1 783.9 1467.1 777.4 1475.3 771.1 1483.5 764.9 1491.9 758.9 1500.4 753.1 1509.0 747.4 1517.7 741.9 1526.5 736.6 1535.4 731.4 1544.4 726.4 1553.5 721.6 1562.6 716.9 1571.8 712.4 1581.1 708.1 1590.5 703.9 1599.9 699.9 1609.4 696.0 1619.0 692.3 1628.6 688.7 1638.3 685.3 1648.0 682.0 1657.7 678.9 1667.5 676.0 1677.4 673.2 1687.2 670.5 1697.1 668.0 1707.1 665.7 1717.1 663.4 1727.1 661.4 1737.1 659.5 1747.2 657.7 1757.2 656.0 1767.3 654.6 1777.4 653.2 1787.6 652.0 1797.7 651.0 1807.9 650.0 1818.1 649.3 1828.2 648.6 1838.4 648.1 1848.6 647.8 1858.8 647.6 1869.0 647.5 1879.2 647.6 1889.4 647.8 1899.6 648.1 1909.8 648.6 1919.9 649.3 1930.1 650.0 1940.3 651.0 1950.4 652.0 1960.6 653.2 1970.7 654.6 1980.8 656.0 1990.8 657.7 2000.9 659.5 2010.9 661.4 2020.9 663.4 2030.9 665.7 2040.9 668.0 2050.8 670.5 2060.6 673.2 2070.5 676.0 2080.3 678.9 2090.0 682.0 2099.7 685.3 2109.4 688.7 2119.0 692.3 2128.6 696.0 2138.1 699.9 2147.5 703.9 2156.9 708.1 2166.2 712.4 2175.4 716.9 2184.5 721.6 2193.6 726.4 2202.6 731.4 2211.5 736.6 2220.3 741.9 2229.0 747.4 2237.6 753.1 2246.1 758.9 2254.5 764.9 2262.7 771.1 2270.9 777.4 2278.9 783.9 2286.8 790.6 2294.5 797.5 2302.1 804.5 2309.5 811.7 2316.8 819.1 2323.8 826.6 2330.8 834.4 2337.5 842.3 2344.0 850.4 2350.4 858.7 2356.5 867.1 2362.4 875.7 2368.1 884.5 2373.5 893.5 2378.7 902.6 2383.6 911.9Z M2363.1 921.4 2367.1 930.6 2370.8 939.9 2374.2 949.3 2377.2 958.9 2380.0 968.7 2382.5 978.5 2384.6 988.5 2386.4 998.6 2387.9 1008.8 2389.0 1019.2 2389.7 1029.6 2390.0 1040.1 2389.9 1050.8 2389.4 1061.5 2388.6 1072.3 2387.2 1083.1 2385.5 1094.1 2383.3 1105.0 2380.7 1116.1 2377.6 1127.1 2374.0 1138.2 2369.9 1149.2 2365.4 1160.3 2360.3 1171.4 2354.8 1182.4 2348.7 1193.4 2342.2 1204.3 2335.1 1215.1 2327.5 1225.9 2319.4 1236.6 2310.8 1247.1 2301.6 1257.5 2291.9 1267.8 2281.7 1277.9 2270.9 1287.8 2259.7 1297.5 2247.9 1307.0 2235.6 1316.2 2222.9 1325.2 2209.6 1333.9 2195.9 1342.3 2181.7 1350.5 2167.0 1358.3 2152.0 1365.7 2136.5 1372.8 2120.6 1379.5 2104.3 1385.8 2087.6 1391.8 2070.7 1397.3 2053.4 1402.3 2035.8 1407.0 2017.9 1411.1 1999.8 1414.8 1981.6 1418.1 1963.1 1420.8 1944.4 1423.1 1925.7 1424.8 1906.8 1426.1 1887.9 1426.9 1869.0 1427.1 1850.1 1426.9 1831.2 1426.1 1812.3 1424.8 1793.6 1423.1 1774.9 1420.8 1756.4 1418.1 1738.2 1414.8 1720.1 1411.1 1702.2 1407.0 1684.6 1402.3 1667.3 1397.3 1650.4 1391.8 1633.7 1385.8 1617.4 1379.5 1601.5 1372.8 1586.0 1365.7 1571.0 1358.3 1556.3 1350.5 1542.1 1342.3 1528.4 1333.9 1515.1 1325.2 1502.4 1316.2 1490.1 1307.0 1478.3 1297.5 1467.1 1287.8 1456.3 1277.9 1446.1 1267.8 1436.4 1257.5 1427.2 1247.1 1418.6 1236.6 1410.5 1225.9 1402.9 1215.1 1395.8 1204.3 1389.3 1193.4 1383.2 1182.4 1377.7 1171.4 1372.6 1160.3 1368.1 1149.2 1364.0 1138.2 1360.4 1127.1 1357.3 1116.1 1354.7 1105.0 1352.5 1094.1 1350.8 1083.1 1349.4 1072.3 1348.6 1061.5 1348.1 1050.8 1348.0 1040.1 1348.3 1029.6 1349.0 1019.2 1350.1 1008.8 1351.6 998.6 1353.4 988.5 1355.5 978.5 1358.0 968.7 1360.8 958.9 1363.8 949.3 1367.2 939.9 1370.9 930.6 1374.9 921.4 1379.1 912.4 1383.6 903.5 1388.4 894.8 1393.4 886.2 1398.6 877.8 1404.0 869.6 1409.7 861.5 1415.6 853.6 1421.7 845.9 1427.9 838.3 1434.4 830.9 1441.0 823.6 1447.8 816.5 1454.8 809.6 1461.9 802.8 1469.2 796.2 1476.6 789.8 1484.2 783.5 1491.8 777.4 1499.7 771.4 1507.6 765.6 1515.6 760.0 1523.8 754.6 1532.1 749.2 1540.4 744.1 1548.9 739.1 1557.5 734.3 1566.1 729.6 1574.8 725.1 1583.6 720.7 1592.5 716.5 1601.4 712.4 1610.5 708.5 1619.5 704.8 1628.7 701.1 1637.9 697.7 1647.1 694.4 1656.4 691.2 1665.8 688.2 1675.2 685.3 1684.6 682.6 1694.1 680.0 1703.6 677.6 1713.2 675.3 1722.8 673.1 1732.4 671.1 1742.0 669.2 1751.7 667.5 1761.4 665.9 1771.1 664.5 1780.8 663.2 1790.6 662.0 1800.4 661.0 1810.1 660.1 1819.9 659.3 1829.7 658.7 1839.5 658.2 1849.4 657.9 1859.2 657.7 1869.0 657.6 1878.8 657.7 1888.6 657.9 1898.5 658.2 1908.3 658.7 1918.1 659.3 1927.9 660.1 1937.6 661.0 1947.4 662.0 1957.2 663.2 1966.9 664.5 1976.6 665.9 1986.3 667.5 1996.0 669.2 2005.6 671.1 2015.2 673.1 2024.8 675.3 2034.4 677.6 2043.9 680.0 2053.4 682.6 2062.8 685.3 2072.2 688.2 2081.6 691.2 2090.9 694.4 2100.1 697.7 2109.3 701.1 2118.5 704.8 2127.5 708.5 2136.6 712.4 2145.5 716.5 2154.4 720.7 2163.2 725.1 2171.9 729.6 2180.5 734.3 2189.1 739.1 2197.6 744.1 2205.9 749.2 2214.2 754.6 2222.4 760.0 2230.4 765.6 2238.3 771.4 2246.2 777.4 2253.8 783.5 2261.4 789.8 2268.8 796.2 2276.1 802.8 2283.2 809.6 2290.2 816.5 2297.0 823.6 2303.6 830.9 2310.1 838.3 2316.3 845.9 2322.4 853.6 2328.3 861.5 2334.0 869.6 2339.4 877.8 2344.6 886.2 2349.6 894.8 2354.4 903.5 2358.9 912.4Z" fill-rule="evenodd"/>
<path id="bt" d="M1885.8 649.0 1886.7 648.1 1890.4 644.3 1895.1 639.5 1899.2 635.2 1884.6 631.8 1883.5 631.1 1876.1 638.9 1861.0 654.4 1834.1 682.1 1793.2 724.2 1739.1 779.9 1672.7 848.2 1596.0 927.1 1513.8 1011.7 1434.2 1093.5 1370.3 1159.3 1329.2 1201.6 1306.9 1224.5 1300.8 1230.7 1327.7 1238.3 1339.1 1226.3 1351.8 1212.8 1361.3 1202.7 1363.1 1200.8 1341.0 1189.2 1339.4 1190.9 1329.9 1200.7 1317.0 1214.0 1305.5 1225.8 1322.3 1244.0 1328.9 1237.0 1351.1 1213.7 1391.8 1170.7 1455.3 1103.8 1534.0 1020.7 1615.4 934.9 1691.2 854.9 1756.8 785.7 1810.2 729.4 1850.5 686.8 1877.0 658.8 1891.9 643.1 1899.2 635.3 1901.9 630.6 1883.6 631.0 1879.4 635.2 1874.7 640.0 1871.0 643.7 1870.2 644.4Z M1867.8 644.4 1867.0 643.7 1863.3 640.0 1858.6 635.2 1854.4 631.0 1836.1 630.6 1838.8 635.3 1846.1 643.1 1861.0 658.8 1887.5 686.8 1927.8 729.4 1981.2 785.7 2046.8 854.9 2122.6 934.9 2204.0 1020.7 2282.7 1103.8 2346.2 1170.7 2386.9 1213.7 2409.1 1237.0 2415.7 1244.0 2432.5 1225.8 2421.0 1214.0 2408.1 1200.7 2398.6 1190.9 2397.0 1189.2 2374.9 1200.8 2376.7 1202.7 2386.2 1212.8 2398.9 1226.3 2410.3 1238.3 2437.2 1230.7 2431.1 1224.5 2408.8 1201.6 2367.7 1159.3 2303.8 1093.5 2224.2 1011.7 2142.0 927.1 2065.3 848.2 1998.9 779.9 1944.8 724.2 1903.9 682.1 1877.0 654.4 1861.9 638.9 1854.5 631.1 1853.4 631.8 1838.8 635.2 1842.9 639.5 1847.6 644.3 1851.3 648.1 1852.2 649.0Z M1325.0 1178.6 1357.2 1178.6 1386.8 1178.6 1415.3 1178.6 1444.4 1178.6 1475.6 1178.6 1510.4 1178.6 1550.5 1178.6 1597.5 1178.6 1654.2 1178.6 1720.4 1178.6 1792.8 1178.6 1868.5 1178.6 1944.1 1178.6 2016.6 1178.6 2082.8 1178.6 2139.5 1178.6 2186.5 1178.6 2226.6 1178.6 2261.4 1178.6 2292.6 1178.6 2321.7 1178.6 2350.2 1178.6 2379.8 1178.6 2412.0 1178.6 2402.1 1153.7 2370.4 1153.7 2341.4 1153.7 2313.4 1153.7 2284.8 1153.7 2254.2 1153.7 2220.0 1153.7 2180.6 1153.7 2134.5 1153.7 2078.9 1153.7 2013.9 1153.7 1942.8 1153.7 1868.5 1153.7 1794.2 1153.7 1723.1 1153.7 1658.1 1153.7 1602.5 1153.7 1556.4 1153.7 1517.0 1153.7 1482.8 1153.7 1452.2 1153.7 1423.6 1153.7 1395.6 1153.7 1366.6 1153.7 1334.9 1153.7Z M1590.5 689.1 1592.8 691.4 1595.1 693.5 1597.3 695.6 1599.5 697.8 1601.7 700.0 1604.1 702.4 1606.7 705.1 1609.5 708.1 1612.8 711.6 1616.6 715.5 1620.7 719.7 1624.9 724.0 1628.9 728.5 1632.6 732.9 1635.8 737.2 1638.4 741.2 1640.2 745.0 1641.6 748.8 1642.6 752.5 1643.3 756.3 1643.8 760.2 1644.0 764.3 1644.2 768.7 1644.3 773.3 1644.2 778.2 1643.9 783.4 1643.3 788.8 1642.6 794.5 1641.8 800.3 1640.8 806.1 1639.9 812.0 1638.9 817.7 1638.0 823.0 1637.1 827.9 1636.1 832.7 1635.0 837.5 1633.8 842.7 1632.5 848.4 1631.1 854.9 1629.5 862.4 1627.6 871.2 1625.5 881.2 1623.2 892.3 1620.7 904.0 1618.1 916.3 1615.5 928.6 1613.0 940.8 1610.5 952.4 1608.1 963.7 1605.7 975.1 1603.2 986.6 1600.8 998.0 1598.4 1009.2 1596.1 1020.0 1593.9 1030.4 1591.9 1040.2 1590.2 1049.2 1588.7 1057.4 1587.5 1064.8 1586.3 1071.7 1585.2 1078.3 1584.1 1084.7 1582.8 1091.1 1581.3 1097.9 1579.5 1105.3 1577.6 1113.0 1575.5 1120.8 1573.4 1128.6 1571.2 1136.1 1569.1 1143.0 1567.1 1149.2 1565.2 1154.2 1563.8 1157.5 1563.0 1158.9 1562.7 1159.2 1562.4 1159.4 1560.8 1160.8 1558.0 1163.5 1554.9 1167.3 1551.8 1171.9 1548.9 1177.2 1546.0 1183.0 1543.0 1189.1 1540.0 1195.5 1536.8 1201.8 1533.6 1207.9 1530.4 1213.3 1527.3 1217.9 1524.0 1222.1 1520.3 1226.2 1516.4 1230.3 1512.3 1234.3 1507.9 1238.2 1503.5 1242.1 1498.9 1245.9 1494.4 1249.6 1490.1 1253.0 1485.8 1256.2 1481.3 1259.4 1476.7 1262.4 1472.2 1265.4 1467.6 1268.3 1463.2 1271.1 1459.0 1273.8 1455.5 1276.1 1452.4 1278.0 1449.5 1279.7 1446.7 1281.3 1444.0 1282.9 1441.1 1284.5 1438.1 1286.2 1435.0 1288.1 1447.1 1312.1 1450.1 1310.3 1452.9 1308.7 1455.8 1307.0 1458.8 1305.3 1462.0 1303.4 1465.4 1301.3 1469.1 1298.9 1473.1 1296.4 1477.2 1293.7 1481.6 1290.8 1486.4 1287.7 1491.5 1284.3 1496.8 1280.7 1502.1 1276.8 1507.6 1272.7 1512.7 1268.5 1517.6 1264.3 1522.6 1260.1 1527.6 1255.6 1532.7 1250.9 1537.9 1245.8 1542.9 1240.5 1547.7 1234.8 1552.4 1228.7 1556.8 1222.1 1560.7 1215.1 1564.3 1208.0 1567.6 1201.1 1570.6 1194.5 1573.3 1188.5 1575.8 1183.4 1577.9 1179.5 1579.3 1177.3 1580.1 1176.4 1580.8 1175.7 1582.4 1174.2 1585.2 1171.4 1588.1 1167.5 1590.6 1163.0 1592.8 1157.8 1594.9 1151.7 1597.0 1144.9 1599.2 1137.5 1601.3 1129.7 1603.3 1121.7 1605.2 1113.6 1607.1 1105.7 1608.7 1098.1 1610.2 1090.8 1611.4 1084.0 1612.4 1077.4 1613.4 1070.7 1614.4 1063.8 1615.5 1056.5 1616.7 1048.6 1618.2 1039.8 1620.0 1030.1 1621.9 1019.8 1624.0 1009.0 1626.1 997.8 1628.3 986.4 1630.5 974.9 1632.7 963.5 1634.9 952.2 1637.1 940.6 1639.4 928.4 1641.7 916.1 1644.0 903.8 1646.3 892.1 1648.4 881.1 1650.3 871.0 1651.9 862.2 1653.4 854.7 1654.7 848.3 1655.8 842.6 1656.9 837.5 1657.9 832.5 1658.8 827.6 1659.6 822.6 1660.5 817.1 1661.3 811.4 1662.1 805.6 1663.0 799.6 1663.7 793.7 1664.3 787.9 1664.8 782.2 1665.0 776.7 1664.9 771.5 1664.7 766.7 1664.5 762.2 1664.1 757.8 1663.5 753.6 1662.7 749.3 1661.4 745.0 1659.7 740.7 1657.4 736.2 1654.4 731.6 1650.8 726.9 1646.7 722.2 1642.4 717.7 1638.1 713.3 1633.9 709.1 1630.1 705.3 1626.8 701.9 1623.9 698.9 1621.2 696.2 1618.7 693.7 1616.4 691.5 1614.1 689.3 1611.9 687.2 1609.7 685.2 1607.4 682.9Z M2134.6 682.9 2132.3 685.1 2130.1 687.2 2127.9 689.3 2125.6 691.4 2123.3 693.7 2120.8 696.2 2118.1 698.9 2115.2 701.9 2111.9 705.3 2108.0 709.1 2103.9 713.2 2099.6 717.6 2095.3 722.2 2091.2 726.9 2087.6 731.6 2084.6 736.2 2082.3 740.7 2080.6 745.0 2079.3 749.3 2078.5 753.5 2077.9 757.8 2077.5 762.2 2077.3 766.7 2077.1 771.5 2077.0 776.7 2077.2 782.2 2077.7 787.9 2078.3 793.7 2079.0 799.6 2079.9 805.5 2080.7 811.4 2081.5 817.1 2082.4 822.5 2083.2 827.6 2084.1 832.5 2085.1 837.4 2086.2 842.6 2087.3 848.3 2088.6 854.7 2090.1 862.2 2091.7 871.0 2093.6 881.0 2095.7 892.1 2098.0 903.8 2100.3 916.0 2102.6 928.4 2104.9 940.6 2107.1 952.2 2109.3 963.5 2111.5 974.9 2113.7 986.4 2115.9 997.8 2118.0 1008.9 2120.0 1019.8 2122.0 1030.1 2123.7 1039.8 2125.3 1048.5 2126.5 1056.5 2127.6 1063.8 2128.6 1070.7 2129.6 1077.3 2130.6 1084.0 2131.8 1090.8 2133.3 1098.0 2134.9 1105.6 2136.8 1113.6 2138.7 1121.7 2140.7 1129.7 2142.8 1137.5 2144.9 1144.9 2147.1 1151.7 2149.2 1157.8 2151.4 1163.0 2153.9 1167.5 2156.8 1171.4 2159.6 1174.2 2161.3 1175.7 2161.9 1176.3 2162.7 1177.2 2164.1 1179.5 2166.2 1183.4 2168.6 1188.5 2171.4 1194.5 2174.4 1201.1 2177.7 1208.0 2181.3 1215.0 2185.2 1222.0 2189.6 1228.7 2194.2 1234.8 2199.1 1240.5 2204.1 1245.8 2209.3 1250.9 2214.4 1255.6 2219.4 1260.1 2224.4 1264.3 2229.3 1268.5 2234.5 1272.7 2239.9 1276.8 2245.3 1280.7 2250.5 1284.3 2255.6 1287.7 2260.4 1290.8 2264.8 1293.7 2268.9 1296.4 2272.9 1298.9 2276.6 1301.3 2280.0 1303.4 2283.2 1305.3 2286.2 1307.0 2289.1 1308.7 2291.9 1310.3 2294.9 1312.1 2307.0 1288.1 2303.9 1286.3 2300.9 1284.5 2298.0 1282.9 2295.2 1281.3 2292.5 1279.7 2289.6 1278.0 2286.5 1276.1 2282.9 1273.8 2278.8 1271.1 2274.4 1268.3 2269.8 1265.4 2265.2 1262.5 2260.7 1259.4 2256.2 1256.2 2251.9 1253.0 2247.6 1249.6 2243.1 1245.9 2238.5 1242.1 2234.1 1238.2 2229.7 1234.3 2225.6 1230.3 2221.7 1226.3 2218.0 1222.1 2214.7 1218.0 2211.6 1213.3 2208.4 1207.9 2205.2 1201.8 2202.1 1195.5 2199.0 1189.2 2196.0 1183.0 2193.1 1177.2 2190.2 1171.9 2187.1 1167.3 2184.0 1163.5 2181.2 1160.8 2179.6 1159.4 2179.3 1159.2 2179.0 1158.9 2178.2 1157.5 2176.8 1154.2 2174.9 1149.2 2172.9 1143.1 2170.8 1136.1 2168.6 1128.6 2166.5 1120.9 2164.4 1113.0 2162.5 1105.3 2160.7 1098.0 2159.2 1091.2 2157.9 1084.7 2156.8 1078.3 2155.7 1071.7 2154.5 1064.8 2153.3 1057.4 2151.8 1049.2 2150.1 1040.2 2148.1 1030.5 2145.9 1020.1 2143.6 1009.2 2141.2 998.0 2138.8 986.6 2136.3 975.2 2133.9 963.7 2131.5 952.4 2129.0 940.8 2126.5 928.7 2123.9 916.3 2121.3 904.1 2118.8 892.3 2116.5 881.3 2114.4 871.2 2112.5 862.4 2110.9 854.9 2109.5 848.4 2108.2 842.7 2107.0 837.5 2105.9 832.7 2104.9 827.9 2104.0 823.0 2103.1 817.7 2102.1 812.0 2101.2 806.1 2100.2 800.3 2099.4 794.5 2098.7 788.8 2098.1 783.4 2097.8 778.2 2097.7 773.3 2097.8 768.7 2098.0 764.3 2098.2 760.2 2098.7 756.3 2099.4 752.5 2100.4 748.8 2101.8 745.1 2103.7 741.2 2106.2 737.2 2109.4 732.9 2113.1 728.5 2117.1 724.1 2121.3 719.7 2125.4 715.5 2129.2 711.6 2132.5 708.1 2135.3 705.1 2137.9 702.4 2140.3 700.0 2142.6 697.8 2144.8 695.6 2146.9 693.5 2149.2 691.4 2151.5 689.1Z M1867.5 943.8 1866.7 944.4 1865.9 944.9 1865.2 945.4 1864.5 945.9 1863.7 946.4 1862.9 947.1 1861.8 947.8 1860.9 948.5 1859.9 949.0 1858.5 949.8 1856.5 950.8 1853.9 952.2 1851.0 953.9 1848.0 956.1 1845.0 958.8 1842.4 961.9 1840.4 965.2 1838.5 968.6 1836.9 972.2 1835.4 975.9 1834.0 979.8 1832.7 983.7 1831.5 987.6 1830.4 991.3 1829.5 995.2 1828.6 999.1 1827.9 1003.0 1827.2 1007.0 1826.6 1011.0 1826.2 1014.9 1825.8 1018.9 1825.5 1022.7 1825.2 1026.5 1825.0 1030.3 1824.9 1034.2 1824.9 1038.1 1825.0 1042.0 1825.2 1046.0 1825.7 1049.9 1826.3 1053.9 1827.2 1057.8 1828.3 1061.6 1829.6 1065.4 1831.0 1069.0 1832.6 1072.6 1834.3 1076.2 1836.2 1079.6 1838.1 1083.0 1840.3 1086.3 1842.6 1089.7 1845.1 1093.0 1847.7 1096.2 1850.4 1099.3 1853.2 1102.3 1856.0 1105.1 1859.0 1107.8 1861.9 1110.2 1864.7 1112.4 1867.7 1114.4 1870.6 1116.2 1873.7 1117.8 1876.8 1119.4 1880.2 1121.1 1884.1 1123.0 1888.5 1125.1 1893.4 1127.5 1898.8 1130.0 1904.5 1132.6 1910.6 1135.3 1916.9 1137.9 1923.4 1140.5 1929.9 1143.0 1936.6 1145.3 1943.5 1147.5 1950.6 1149.7 1957.7 1151.8 1965.0 1153.9 1972.3 1155.9 1979.6 1157.8 1986.9 1159.7 1994.2 1161.5 2001.6 1163.3 2009.0 1165.0 2016.5 1166.6 2023.8 1168.2 2031.2 1169.8 2038.5 1171.4 2045.9 1173.1 2050.1 1149.2 2042.8 1147.6 2035.5 1146.0 2028.2 1144.5 2021.0 1142.9 2013.9 1141.4 2006.9 1139.8 2000.0 1138.2 1993.1 1136.5 1986.2 1134.7 1979.2 1132.9 1972.3 1131.0 1965.4 1129.1 1958.7 1127.2 1952.2 1125.2 1946.0 1123.2 1940.0 1121.2 1934.2 1119.1 1928.4 1116.9 1922.7 1114.5 1917.2 1112.1 1911.8 1109.7 1906.8 1107.4 1902.1 1105.2 1897.8 1103.2 1894.1 1101.4 1890.9 1099.8 1888.3 1098.6 1886.2 1097.4 1884.4 1096.4 1882.7 1095.3 1880.9 1093.9 1878.9 1092.3 1876.7 1090.4 1874.5 1088.2 1872.3 1085.9 1870.1 1083.5 1868.0 1080.9 1866.0 1078.4 1864.1 1075.7 1862.4 1073.1 1860.7 1070.4 1859.2 1067.6 1857.7 1064.7 1856.4 1061.9 1855.2 1059.0 1854.1 1056.0 1853.2 1053.1 1852.4 1050.1 1851.9 1047.1 1851.5 1044.0 1851.2 1040.7 1851.0 1037.4 1851.0 1034.0 1851.0 1030.5 1851.2 1026.9 1851.3 1023.3 1851.5 1019.7 1851.8 1016.0 1852.1 1012.4 1852.6 1008.7 1853.1 1005.1 1853.7 1001.5 1854.4 998.1 1855.2 994.7 1856.1 991.2 1857.1 987.6 1858.2 984.0 1859.4 980.6 1860.6 977.4 1861.9 974.5 1863.1 972.0 1864.2 970.1 1865.2 968.9 1866.2 968.0 1867.5 967.1 1868.9 966.2 1870.7 965.3 1872.7 964.2 1875.0 963.0 1877.2 961.6 1878.8 960.5 1879.9 959.7 1880.9 959.0 1881.7 958.4 1882.4 957.9 1883.1 957.4 1883.8 956.9 1884.6 956.3Z M1853.4 956.3 1854.2 956.9 1854.9 957.4 1855.6 957.9 1856.3 958.4 1857.1 959.0 1858.1 959.7 1859.2 960.5 1860.8 961.6 1863.0 963.0 1865.3 964.2 1867.3 965.3 1869.1 966.2 1870.5 967.1 1871.8 968.0 1872.8 968.9 1873.8 970.1 1874.9 972.0 1876.1 974.5 1877.4 977.4 1878.6 980.6 1879.8 984.0 1880.9 987.6 1881.9 991.2 1882.8 994.7 1883.6 998.1 1884.3 1001.5 1884.9 1005.1 1885.4 1008.7 1885.9 1012.4 1886.2 1016.0 1886.5 1019.7 1886.7 1023.3 1886.8 1026.9 1887.0 1030.5 1887.0 1034.0 1887.0 1037.4 1886.8 1040.7 1886.5 1044.0 1886.1 1047.1 1885.6 1050.1 1884.8 1053.1 1883.9 1056.0 1882.8 1059.0 1881.6 1061.9 1880.3 1064.7 1878.8 1067.6 1877.3 1070.4 1875.6 1073.1 1873.9 1075.7 1872.0 1078.4 1870.0 1080.9 1867.9 1083.5 1865.7 1085.9 1863.5 1088.2 1861.3 1090.4 1859.1 1092.3 1857.1 1093.9 1855.3 1095.3 1853.6 1096.4 1851.8 1097.4 1849.7 1098.6 1847.1 1099.8 1843.9 1101.4 1840.2 1103.2 1835.9 1105.2 1831.2 1107.4 1826.2 1109.7 1820.8 1112.1 1815.3 1114.5 1809.6 1116.9 1803.8 1119.1 1798.0 1121.2 1792.0 1123.2 1785.8 1125.2 1779.3 1127.2 1772.6 1129.1 1765.7 1131.0 1758.8 1132.9 1751.8 1134.7 1744.9 1136.5 1738.0 1138.2 1731.1 1139.8 1724.1 1141.4 1717.0 1142.9 1709.8 1144.5 1702.5 1146.0 1695.2 1147.6 1687.9 1149.2 1692.1 1173.1 1699.5 1171.4 1706.8 1169.8 1714.2 1168.2 1721.5 1166.6 1729.0 1165.0 1736.4 1163.3 1743.8 1161.5 1751.1 1159.7 1758.4 1157.8 1765.7 1155.9 1773.0 1153.9 1780.3 1151.8 1787.4 1149.7 1794.5 1147.5 1801.4 1145.3 1808.1 1143.0 1814.6 1140.5 1821.1 1137.9 1827.4 1135.3 1833.5 1132.6 1839.2 1130.0 1844.6 1127.5 1849.5 1125.1 1853.9 1123.0 1857.8 1121.1 1861.2 1119.4 1864.3 1117.8 1867.4 1116.2 1870.3 1114.4 1873.3 1112.4 1876.1 1110.2 1879.0 1107.8 1882.0 1105.1 1884.8 1102.3 1887.6 1099.3 1890.3 1096.2 1892.9 1093.0 1895.4 1089.7 1897.7 1086.3 1899.9 1083.0 1901.8 1079.6 1903.7 1076.2 1905.4 1072.6 1907.0 1069.0 1908.4 1065.4 1909.7 1061.6 1910.8 1057.8 1911.7 1053.9 1912.3 1049.9 1912.8 1046.0 1913.0 1042.0 1913.1 1038.1 1913.1 1034.2 1913.0 1030.3 1912.8 1026.5 1912.5 1022.7 1912.2 1018.9 1911.8 1014.9 1911.4 1011.0 1910.8 1007.0 1910.1 1003.0 1909.4 999.1 1908.5 995.2 1907.6 991.3 1906.5 987.6 1905.3 983.7 1904.0 979.8 1902.6 975.9 1901.1 972.2 1899.5 968.6 1897.6 965.2 1895.6 961.9 1893.0 958.8 1890.0 956.1 1887.0 953.9 1884.1 952.2 1881.5 950.8 1879.5 949.8 1878.1 949.0 1877.1 948.5 1876.2 947.8 1875.1 947.1 1874.3 946.4 1873.5 945.9 1872.8 945.4 1872.1 944.9 1871.3 944.4 1870.5 943.8Z M1860.2 790.0 1860.2 791.2 1860.2 792.4 1860.2 793.6 1860.2 794.8 1860.1 796.1 1860.1 797.3 1860.1 798.6 1860.1 800.0 1860.1 801.4 1860.1 802.9 1860.1 804.5 1860.1 806.1 1860.0 807.7 1860.0 809.3 1860.0 810.9 1860.0 812.5 1878.0 812.5 1878.0 810.9 1878.0 809.3 1878.0 807.7 1877.9 806.1 1877.9 804.5 1877.9 802.9 1877.9 801.4 1877.9 800.0 1877.9 798.6 1877.9 797.3 1877.9 796.1 1877.8 794.8 1877.8 793.6 1877.8 792.4 1877.8 791.2 1877.8 790.0Z" fill-rule="nonzero"/><path id="bs" d="M1885.7 657.5 1886.7 656.6 1890.3 652.8 1894.9 648.0 1899.0 643.7 1884.5 640.3 1883.5 639.6 1876.1 647.4 1861.1 662.9 1834.3 690.6 1793.6 732.7 1739.8 788.4 1673.7 856.7 1597.4 935.6 1515.6 1020.0 1436.4 1101.4 1372.8 1166.8 1331.9 1208.7 1309.7 1231.4 1303.7 1237.6 1330.4 1245.2 1341.7 1233.2 1354.4 1219.8 1363.8 1209.9 1365.6 1208.0 1343.7 1196.4 1342.1 1198.1 1332.6 1207.8 1319.8 1221.0 1308.4 1232.8 1325.0 1250.8 1331.6 1243.9 1353.6 1220.8 1394.2 1178.1 1457.3 1111.6 1535.7 1029.0 1616.7 943.3 1692.1 863.4 1757.4 794.2 1810.5 737.9 1850.6 695.3 1877.0 667.3 1891.8 651.6 1899.1 643.8 1901.7 639.1 1883.5 639.5 1879.4 643.7 1874.6 648.5 1871.0 652.2 1870.2 652.9Z M1867.8 652.9 1867.0 652.2 1863.4 648.5 1858.6 643.7 1854.5 639.5 1836.3 639.1 1838.9 643.8 1846.2 651.6 1861.0 667.3 1887.4 695.3 1927.5 737.9 1980.6 794.2 2045.9 863.4 2121.3 943.3 2202.3 1029.0 2280.7 1111.6 2343.8 1178.1 2384.4 1220.8 2406.4 1243.9 2413.0 1250.8 2429.6 1232.8 2418.2 1221.0 2405.4 1207.8 2395.9 1198.1 2394.3 1196.4 2372.4 1208.0 2374.2 1209.9 2383.6 1219.8 2396.3 1233.2 2407.6 1245.2 2434.3 1237.6 2428.3 1231.4 2406.1 1208.7 2365.2 1166.8 2301.6 1101.4 2222.4 1020.0 2140.6 935.6 2064.3 856.7 1998.2 788.4 1944.4 732.7 1903.7 690.6 1876.9 662.9 1861.9 647.4 1854.5 639.6 1853.5 640.3 1839.0 643.7 1843.1 648.0 1847.7 652.8 1851.3 656.6 1852.3 657.5Z M1327.7 1185.9 1359.8 1185.9 1389.2 1185.9 1417.6 1185.9 1446.5 1185.9 1477.5 1185.9 1512.2 1185.9 1552.1 1185.9 1598.9 1185.9 1655.3 1185.9 1721.1 1185.9 1793.2 1185.9 1868.5 1185.9 1943.8 1185.9 2015.9 1185.9 2081.7 1185.9 2138.1 1185.9 2184.9 1185.9 2224.8 1185.9 2259.5 1185.9 2290.5 1185.9 2319.4 1185.9 2347.8 1185.9 2377.2 1185.9 2409.3 1185.9 2399.4 1161.1 2367.9 1161.1 2339.0 1161.1 2311.2 1161.1 2282.8 1161.1 2252.3 1161.1 2218.3 1161.1 2179.1 1161.1 2133.2 1161.1 2077.8 1161.1 2013.2 1161.1 1942.4 1161.1 1868.5 1161.1 1794.6 1161.1 1723.8 1161.1 1659.2 1161.1 1603.8 1161.1 1557.9 1161.1 1518.7 1161.1 1484.7 1161.1 1454.2 1161.1 1425.9 1161.1 1398.0 1161.1 1369.1 1161.1 1337.6 1161.1Z M1591.9 697.6 1594.2 699.9 1596.4 702.0 1598.6 704.1 1600.8 706.3 1603.1 708.5 1605.4 710.9 1608.0 713.6 1610.8 716.6 1614.1 720.1 1617.9 724.0 1622.0 728.2 1626.1 732.5 1630.1 737.0 1633.8 741.4 1637.0 745.7 1639.5 749.7 1641.4 753.5 1642.8 757.3 1643.8 761.0 1644.5 764.8 1644.9 768.7 1645.2 772.8 1645.3 777.2 1645.4 781.8 1645.3 786.7 1645.0 791.9 1644.5 797.3 1643.8 803.0 1642.9 808.8 1642.0 814.6 1641.0 820.5 1640.1 826.2 1639.2 831.5 1638.2 836.4 1637.2 841.2 1636.2 846.0 1635.0 851.2 1633.7 856.9 1632.3 863.4 1630.7 870.9 1628.8 879.7 1626.7 889.7 1624.4 900.8 1621.9 912.5 1619.4 924.8 1616.8 937.1 1614.2 949.3 1611.8 960.9 1609.4 972.1 1607.0 983.5 1604.6 995.0 1602.1 1006.3 1599.8 1017.5 1597.5 1028.3 1595.3 1038.6 1593.3 1048.4 1591.6 1057.3 1590.1 1065.4 1588.9 1072.8 1587.7 1079.7 1586.6 1086.2 1585.5 1092.6 1584.2 1099.0 1582.7 1105.8 1581.0 1113.1 1579.1 1120.8 1577.0 1128.5 1574.9 1136.3 1572.7 1143.7 1570.6 1150.6 1568.6 1156.7 1566.7 1161.7 1565.3 1164.9 1564.5 1166.4 1564.3 1166.6 1564.0 1166.9 1562.4 1168.2 1559.6 1170.9 1556.4 1174.7 1553.4 1179.3 1550.5 1184.5 1547.6 1190.3 1544.6 1196.4 1541.6 1202.7 1538.5 1208.9 1535.3 1214.9 1532.1 1220.3 1529.0 1224.9 1525.7 1229.1 1522.1 1233.2 1518.2 1237.2 1514.1 1241.2 1509.7 1245.0 1505.3 1248.9 1500.7 1252.7 1496.3 1256.4 1492.0 1259.8 1487.7 1262.9 1483.3 1266.1 1478.7 1269.1 1474.1 1272.1 1469.6 1274.9 1465.2 1277.7 1461.1 1280.4 1457.5 1282.6 1454.5 1284.5 1451.6 1286.2 1448.9 1287.8 1446.1 1289.4 1443.3 1291.0 1440.2 1292.7 1437.1 1294.5 1449.3 1318.4 1452.2 1316.6 1455.0 1315.0 1457.9 1313.3 1460.8 1311.6 1464.0 1309.7 1467.4 1307.6 1471.1 1305.3 1475.0 1302.8 1479.1 1300.1 1483.5 1297.3 1488.3 1294.2 1493.4 1290.8 1498.6 1287.2 1504.0 1283.4 1509.4 1279.3 1514.5 1275.1 1519.4 1271.0 1524.3 1266.8 1529.3 1262.3 1534.4 1257.6 1539.5 1252.6 1544.5 1247.3 1549.4 1241.7 1554.0 1235.6 1558.3 1229.0 1562.3 1222.1 1565.8 1215.1 1569.1 1208.2 1572.1 1201.7 1574.8 1195.8 1577.3 1190.7 1579.3 1186.8 1580.8 1184.6 1581.5 1183.7 1582.2 1183.0 1583.8 1181.6 1586.6 1178.8 1589.5 1174.9 1592.0 1170.4 1594.2 1165.2 1596.3 1159.2 1598.4 1152.5 1600.5 1145.1 1602.6 1137.4 1604.6 1129.4 1606.6 1121.4 1608.4 1113.5 1610.0 1105.9 1611.4 1098.7 1612.6 1091.9 1613.7 1085.3 1614.7 1078.7 1615.6 1071.9 1616.7 1064.6 1618.0 1056.7 1619.5 1047.9 1621.3 1038.3 1623.2 1028.0 1625.2 1017.3 1627.4 1006.1 1629.5 994.8 1631.7 983.4 1633.9 971.9 1636.1 960.7 1638.2 949.1 1640.5 936.9 1642.9 924.6 1645.2 912.3 1647.4 900.6 1649.5 889.6 1651.3 879.5 1653.0 870.7 1654.4 863.2 1655.7 856.8 1656.9 851.1 1657.9 846.0 1658.9 841.0 1659.8 836.1 1660.7 831.1 1661.5 825.6 1662.3 819.9 1663.2 814.1 1664.0 808.1 1664.7 802.2 1665.3 796.4 1665.8 790.7 1666.0 785.2 1665.9 780.0 1665.8 775.2 1665.5 770.7 1665.1 766.3 1664.6 762.1 1663.7 757.8 1662.4 753.5 1660.7 749.2 1658.5 744.7 1655.5 740.1 1651.9 735.4 1647.8 730.7 1643.6 726.2 1639.3 721.8 1635.1 717.6 1631.3 713.8 1628.0 710.4 1625.2 707.4 1622.5 704.7 1620.0 702.2 1617.6 700.0 1615.4 697.8 1613.2 695.7 1611.0 693.7 1608.7 691.4Z M2133.3 691.4 2131.0 693.6 2128.8 695.7 2126.6 697.8 2124.3 699.9 2122.0 702.2 2119.5 704.7 2116.8 707.4 2113.9 710.4 2110.6 713.8 2106.8 717.6 2102.7 721.7 2098.4 726.1 2094.1 730.7 2090.1 735.4 2086.5 740.1 2083.5 744.7 2081.3 749.2 2079.6 753.5 2078.3 757.8 2077.4 762.0 2076.8 766.3 2076.5 770.7 2076.2 775.2 2076.0 780.0 2076.0 785.2 2076.2 790.7 2076.6 796.4 2077.3 802.2 2078.0 808.1 2078.8 814.0 2079.6 819.9 2080.5 825.6 2081.3 831.0 2082.1 836.1 2083.1 841.0 2084.0 845.9 2085.1 851.1 2086.2 856.8 2087.5 863.2 2089.0 870.7 2090.6 879.5 2092.5 889.5 2094.6 900.6 2096.8 912.3 2099.1 924.5 2101.4 936.9 2103.7 949.0 2105.9 960.6 2108.1 971.9 2110.2 983.3 2112.4 994.8 2114.6 1006.1 2116.7 1017.2 2118.8 1028.0 2120.7 1038.3 2122.5 1047.9 2124.0 1056.7 2125.2 1064.6 2126.3 1071.8 2127.3 1078.7 2128.3 1085.3 2129.3 1091.9 2130.5 1098.7 2132.0 1105.9 2133.6 1113.4 2135.4 1121.3 2137.4 1129.3 2139.4 1137.3 2141.5 1145.1 2143.6 1152.4 2145.7 1159.2 2147.8 1165.2 2149.9 1170.4 2152.4 1174.9 2155.3 1178.7 2158.1 1181.6 2159.8 1183.0 2160.5 1183.7 2161.2 1184.5 2162.7 1186.8 2164.7 1190.7 2167.1 1195.7 2169.9 1201.7 2172.9 1208.2 2176.2 1215.1 2179.7 1222.1 2183.7 1229.0 2188.0 1235.6 2192.6 1241.7 2197.5 1247.3 2202.5 1252.6 2207.6 1257.6 2212.7 1262.3 2217.7 1266.8 2222.6 1271.0 2227.5 1275.1 2232.6 1279.3 2238.0 1283.4 2243.4 1287.2 2248.6 1290.8 2253.7 1294.1 2258.5 1297.2 2262.9 1300.1 2266.9 1302.8 2270.9 1305.3 2274.6 1307.6 2278.0 1309.7 2281.2 1311.6 2284.1 1313.3 2287.0 1315.0 2289.8 1316.6 2292.7 1318.4 2304.8 1294.5 2301.7 1292.7 2298.7 1291.0 2295.9 1289.4 2293.1 1287.8 2290.4 1286.2 2287.5 1284.5 2284.4 1282.6 2280.9 1280.4 2276.8 1277.7 2272.3 1274.9 2267.8 1272.1 2263.3 1269.1 2258.7 1266.1 2254.2 1263.0 2250.0 1259.8 2245.7 1256.4 2241.3 1252.7 2236.7 1248.9 2232.2 1245.1 2227.9 1241.2 2223.8 1237.2 2219.9 1233.2 2216.3 1229.1 2213.0 1225.0 2209.9 1220.4 2206.7 1215.0 2203.5 1209.0 2200.4 1202.7 2197.3 1196.4 2194.4 1190.3 2191.5 1184.6 2188.6 1179.3 2185.5 1174.7 2182.4 1170.9 2179.6 1168.2 2178.0 1166.9 2177.7 1166.6 2177.5 1166.4 2176.7 1165.0 2175.3 1161.7 2173.4 1156.7 2171.4 1150.6 2169.3 1143.7 2167.1 1136.3 2165.0 1128.6 2162.9 1120.8 2161.0 1113.1 2159.3 1105.8 2157.8 1099.0 2156.5 1092.6 2155.4 1086.2 2154.3 1079.7 2153.1 1072.9 2151.9 1065.5 2150.4 1057.3 2148.7 1048.4 2146.7 1038.7 2144.5 1028.3 2142.2 1017.5 2139.9 1006.4 2137.4 995.0 2135.0 983.6 2132.6 972.2 2130.2 960.9 2127.7 949.3 2125.2 937.1 2122.6 924.8 2120.0 912.6 2117.6 900.8 2115.3 889.8 2113.2 879.7 2111.3 870.9 2109.7 863.4 2108.3 856.9 2107.0 851.2 2105.8 846.0 2104.7 841.2 2103.8 836.4 2102.8 831.5 2101.9 826.2 2101.0 820.5 2100.0 814.6 2099.1 808.8 2098.2 803.0 2097.5 797.3 2097.0 791.9 2096.7 786.7 2096.6 781.8 2096.7 777.2 2096.8 772.8 2097.1 768.7 2097.5 764.8 2098.2 761.0 2099.2 757.3 2100.6 753.6 2102.5 749.7 2105.0 745.7 2108.2 741.4 2111.9 737.0 2115.9 732.6 2120.0 728.2 2124.1 724.0 2127.9 720.1 2131.2 716.6 2134.0 713.6 2136.6 710.9 2138.9 708.5 2141.2 706.3 2143.4 704.1 2145.6 702.0 2147.8 699.9 2150.1 697.6Z M1867.5 952.3 1866.7 952.8 1865.9 953.4 1865.2 953.9 1864.5 954.4 1863.8 954.9 1862.9 955.5 1861.9 956.3 1860.9 956.9 1860.0 957.5 1858.6 958.2 1856.5 959.3 1854.0 960.6 1851.1 962.4 1848.1 964.6 1845.2 967.2 1842.6 970.3 1840.5 973.6 1838.7 977.0 1837.1 980.6 1835.6 984.3 1834.2 988.2 1832.9 992.1 1831.7 995.9 1830.6 999.7 1829.7 1003.5 1828.8 1007.4 1828.1 1011.3 1827.4 1015.3 1826.9 1019.3 1826.4 1023.2 1826.0 1027.1 1825.7 1031.0 1825.5 1034.7 1825.3 1038.5 1825.1 1042.4 1825.1 1046.3 1825.2 1050.2 1825.4 1054.1 1825.9 1058.0 1826.5 1062.0 1827.4 1065.9 1828.5 1069.7 1829.8 1073.4 1831.2 1077.0 1832.8 1080.6 1834.5 1084.1 1836.3 1087.5 1838.3 1090.9 1840.4 1094.2 1842.7 1097.6 1845.2 1100.9 1847.8 1104.0 1850.5 1107.1 1853.2 1110.1 1856.1 1112.9 1859.0 1115.6 1861.9 1118.0 1864.8 1120.2 1867.7 1122.1 1870.6 1123.9 1873.6 1125.5 1876.8 1127.1 1880.2 1128.8 1884.0 1130.7 1888.4 1132.8 1893.3 1135.2 1898.7 1137.7 1904.4 1140.3 1910.4 1142.9 1916.6 1145.5 1923.1 1148.1 1929.6 1150.5 1936.3 1152.8 1943.1 1155.0 1950.2 1157.2 1957.3 1159.3 1964.5 1161.3 1971.8 1163.3 1979.0 1165.2 1986.3 1167.1 1993.6 1169.0 2001.0 1170.7 2008.3 1172.4 2015.7 1174.0 2023.1 1175.6 2030.4 1177.2 2037.7 1178.8 2045.0 1180.4 2049.2 1156.7 2041.9 1155.1 2034.6 1153.5 2027.4 1152.0 2020.3 1150.5 2013.2 1149.0 2006.2 1147.4 1999.3 1145.8 1992.5 1144.1 1985.6 1142.3 1978.6 1140.5 1971.7 1138.7 1964.9 1136.8 1958.3 1134.9 1951.8 1132.9 1945.6 1130.9 1939.6 1128.9 1933.9 1126.8 1928.1 1124.6 1922.4 1122.2 1916.9 1119.9 1911.6 1117.5 1906.6 1115.2 1901.9 1113.0 1897.7 1111.0 1893.9 1109.2 1890.8 1107.7 1888.2 1106.4 1886.1 1105.3 1884.3 1104.2 1882.6 1103.1 1880.9 1101.8 1878.9 1100.2 1876.7 1098.2 1874.5 1096.1 1872.3 1093.8 1870.1 1091.4 1868.0 1088.9 1866.0 1086.3 1864.1 1083.7 1862.4 1081.1 1860.8 1078.4 1859.2 1075.6 1857.8 1072.8 1856.4 1069.9 1855.2 1067.0 1854.2 1064.1 1853.3 1061.2 1852.5 1058.2 1852.0 1055.2 1851.5 1052.1 1851.3 1048.9 1851.1 1045.6 1851.1 1042.2 1851.1 1038.7 1851.2 1035.1 1851.4 1031.5 1851.6 1027.9 1851.9 1024.3 1852.2 1020.6 1852.7 1017.0 1853.2 1013.4 1853.8 1009.9 1854.5 1006.4 1855.3 1003.0 1856.2 999.5 1857.2 996.0 1858.3 992.4 1859.4 989.0 1860.7 985.8 1861.9 982.9 1863.2 980.4 1864.3 978.6 1865.2 977.4 1866.2 976.4 1867.5 975.5 1868.9 974.7 1870.7 973.7 1872.7 972.7 1875.0 971.4 1877.2 970.0 1878.8 968.9 1879.9 968.1 1880.8 967.5 1881.6 966.9 1882.3 966.4 1883.0 965.8 1883.7 965.3 1884.5 964.7Z M1853.5 964.7 1854.3 965.3 1855.0 965.8 1855.7 966.4 1856.4 966.9 1857.2 967.5 1858.1 968.1 1859.2 968.9 1860.8 970.0 1863.0 971.4 1865.3 972.7 1867.3 973.7 1869.1 974.7 1870.5 975.5 1871.8 976.4 1872.8 977.4 1873.7 978.6 1874.8 980.4 1876.1 982.9 1877.3 985.8 1878.6 989.0 1879.7 992.4 1880.8 996.0 1881.8 999.5 1882.7 1003.0 1883.5 1006.4 1884.2 1009.9 1884.8 1013.4 1885.3 1017.0 1885.8 1020.6 1886.1 1024.3 1886.4 1027.9 1886.6 1031.5 1886.8 1035.1 1886.9 1038.7 1886.9 1042.2 1886.9 1045.6 1886.7 1048.9 1886.5 1052.1 1886.0 1055.2 1885.5 1058.2 1884.7 1061.2 1883.8 1064.1 1882.8 1067.0 1881.6 1069.9 1880.2 1072.8 1878.8 1075.6 1877.2 1078.4 1875.6 1081.1 1873.9 1083.7 1872.0 1086.3 1870.0 1088.9 1867.9 1091.4 1865.7 1093.8 1863.5 1096.1 1861.3 1098.2 1859.1 1100.2 1857.1 1101.8 1855.4 1103.1 1853.7 1104.2 1851.9 1105.3 1849.8 1106.4 1847.2 1107.7 1844.1 1109.2 1840.3 1111.0 1836.1 1113.0 1831.4 1115.2 1826.4 1117.5 1821.1 1119.9 1815.6 1122.2 1809.9 1124.6 1804.1 1126.8 1798.4 1128.9 1792.4 1130.9 1786.2 1132.9 1779.7 1134.9 1773.1 1136.8 1766.3 1138.7 1759.4 1140.5 1752.4 1142.3 1745.5 1144.1 1738.7 1145.8 1731.8 1147.4 1724.8 1149.0 1717.7 1150.5 1710.6 1152.0 1703.4 1153.5 1696.1 1155.1 1688.8 1156.7 1693.0 1180.4 1700.3 1178.8 1707.6 1177.2 1714.9 1175.6 1722.3 1174.0 1729.7 1172.4 1737.0 1170.7 1744.4 1169.0 1751.7 1167.1 1759.0 1165.2 1766.2 1163.3 1773.5 1161.3 1780.7 1159.3 1787.8 1157.2 1794.9 1155.0 1801.7 1152.8 1808.4 1150.5 1814.9 1148.1 1821.4 1145.5 1827.6 1142.9 1833.6 1140.3 1839.3 1137.7 1844.7 1135.2 1849.6 1132.8 1854.0 1130.7 1857.8 1128.8 1861.2 1127.1 1864.4 1125.5 1867.4 1123.9 1870.3 1122.1 1873.2 1120.2 1876.1 1118.0 1879.0 1115.6 1881.9 1112.9 1884.8 1110.1 1887.5 1107.1 1890.2 1104.0 1892.8 1100.9 1895.3 1097.6 1897.6 1094.2 1899.7 1090.9 1901.7 1087.5 1903.5 1084.1 1905.2 1080.6 1906.8 1077.0 1908.2 1073.4 1909.5 1069.7 1910.6 1065.9 1911.5 1062.0 1912.1 1058.0 1912.6 1054.1 1912.8 1050.2 1912.9 1046.3 1912.9 1042.4 1912.7 1038.5 1912.5 1034.7 1912.3 1031.0 1912.0 1027.1 1911.6 1023.2 1911.1 1019.3 1910.6 1015.3 1909.9 1011.3 1909.2 1007.4 1908.3 1003.5 1907.4 999.7 1906.3 995.9 1905.1 992.1 1903.8 988.2 1902.4 984.3 1900.9 980.6 1899.3 977.0 1897.5 973.6 1895.4 970.3 1892.8 967.2 1889.9 964.6 1886.9 962.4 1884.0 960.6 1881.5 959.3 1879.4 958.2 1878.0 957.5 1877.1 956.9 1876.1 956.3 1875.1 955.5 1874.2 954.9 1873.5 954.4 1872.8 953.9 1872.1 953.4 1871.3 952.8 1870.5 952.3Z M1860.2 798.5 1860.2 799.7 1860.2 800.9 1860.2 802.1 1860.2 803.3 1860.2 804.6 1860.2 805.8 1860.2 807.1 1860.2 808.5 1860.1 809.9 1860.1 811.4 1860.1 813.0 1860.1 814.6 1860.1 816.2 1860.1 817.8 1860.1 819.4 1860.0 821.0 1878.0 821.0 1877.9 819.4 1877.9 817.8 1877.9 816.2 1877.9 814.6 1877.9 813.0 1877.9 811.4 1877.9 809.9 1877.8 808.5 1877.8 807.1 1877.8 805.8 1877.8 804.6 1877.8 803.3 1877.8 802.1 1877.8 800.9 1877.8 799.7 1877.8 798.5Z" fill-rule="nonzero"/>
<path id="lt" d="M1886.8 806.3 1885.9 805.4 1885.3 804.8 1884.7 804.2 1883.9 803.5 1883.0 802.6 1881.7 801.4 1879.9 799.8 1877.7 797.8 1875.0 795.2 1871.8 792.0 1868.0 788.2 1863.9 784.1 1859.4 779.8 1854.5 775.7 1849.2 771.7 1843.5 768.2 1837.8 765.1 1831.9 762.3 1825.7 759.7 1819.4 757.3 1812.7 755.0 1805.8 752.9 1798.5 751.0 1790.9 749.1 1782.9 747.4 1774.3 745.7 1765.4 744.1 1756.1 742.7 1746.8 741.4 1737.4 740.4 1728.2 739.5 1719.2 738.8 1710.3 738.3 1701.5 738.1 1692.8 738.1 1684.1 738.3 1675.5 738.6 1666.9 739.0 1658.3 739.5 1649.8 740.2 1641.0 740.9 1631.9 741.8 1622.6 742.9 1613.3 744.1 1604.2 745.4 1595.5 746.8 1587.3 748.3 1579.8 750.1 1573.0 752.0 1566.9 754.1 1561.5 756.4 1556.7 758.8 1552.4 761.2 1548.6 763.7 1545.0 766.1 1541.3 768.5 1537.4 771.3 1533.5 774.3 1529.9 777.3 1526.4 780.5 1523.1 783.7 1520.0 786.9 1517.1 790.0 1514.5 793.1 1512.0 796.2 1509.8 799.2 1507.8 802.3 1506.0 805.4 1504.4 808.5 1503.0 811.5 1501.8 814.6 1500.7 817.7 1499.8 820.8 1499.2 824.0 1498.8 827.2 1498.6 830.4 1498.6 833.4 1498.7 836.4 1498.9 839.3 1499.2 842.1 1499.6 844.8 1500.1 847.4 1500.8 850.0 1501.6 852.5 1502.5 855.0 1503.7 857.4 1505.0 859.8 1506.5 862.0 1508.1 864.2 1509.9 866.4 1511.8 868.4 1514.0 870.4 1516.3 872.3 1518.8 874.1 1521.5 875.9 1524.4 877.6 1527.5 879.2 1530.7 880.7 1534.1 882.1 1537.6 883.4 1541.3 884.6 1545.2 885.8 1549.3 887.1 1553.7 888.3 1558.1 889.5 1562.5 890.7 1567.0 891.9 1571.9 893.1 1577.4 894.3 1583.8 895.6 1591.3 897.1 1600.2 898.7 1611.1 900.6 1623.9 902.5 1638.0 904.6 1652.9 906.8 1668.0 909.1 1682.5 911.4 1696.0 913.7 1707.6 915.9 1717.6 918.1 1726.7 920.4 1735.1 922.8 1742.9 925.2 1750.6 927.7 1758.1 930.1 1765.9 932.6 1773.9 934.9 1782.0 937.2 1790.2 939.4 1798.3 941.7 1806.3 943.8 1814.0 945.9 1821.4 947.8 1828.3 949.6 1834.6 951.0 1839.8 952.2 1843.9 952.9 1847.3 953.2 1849.9 953.4 1852.2 953.6 1855.1 953.9 1859.5 954.5 1866.6 955.6 1876.7 957.0 1889.0 958.2 1902.4 959.5 1916.5 961.0 1930.4 962.9 1943.5 965.5 1955.0 968.7 1964.2 972.7 1972.2 978.0 1980.2 984.7 1987.8 992.7 1995.1 1001.8 2002.0 1011.5 2008.6 1021.7 2014.7 1032.1 2020.4 1042.2 2025.5 1052.0 2029.9 1062.1 2033.7 1072.6 2037.1 1083.5 2040.0 1094.5 2042.7 1105.6 2045.0 1116.8 2047.1 1127.7 2048.9 1138.5 2050.2 1149.3 2051.1 1160.2 2051.7 1171.0 2051.9 1181.8 2051.8 1192.3 2051.6 1202.6 2051.1 1212.5 2050.6 1221.7 2049.8 1230.2 2048.8 1238.2 2047.5 1245.8 2045.9 1253.2 2044.0 1260.6 2041.7 1268.2 2039.0 1275.9 2035.8 1284.0 2031.8 1292.6 2027.2 1301.4 2022.3 1310.3 2017.1 1319.0 2012.1 1327.3 2007.2 1334.9 2002.9 1341.5 1999.3 1346.8 1996.1 1351.0 1993.3 1354.3 1990.6 1357.1 1987.9 1359.7 1985.0 1362.3 1981.7 1365.2 1978.2 1368.4 1974.7 1371.6 1971.3 1374.5 1967.9 1377.3 1964.4 1380.1 1960.8 1382.8 1957.2 1385.5 1953.5 1388.2 1949.8 1390.8 1946.0 1393.4 1942.2 1396.0 1938.5 1398.5 1934.8 1400.9 1931.1 1403.1 1927.5 1405.3 1923.8 1407.3 1920.1 1409.2 1916.3 1411.0 1912.4 1412.7 1908.5 1414.3 1904.5 1415.8 1900.5 1417.2 1896.5 1418.5 1892.5 1419.7 1888.7 1420.7 1884.9 1421.6 1881.0 1422.3 1877.1 1423.0 1873.0 1423.5 1868.9 1424.0 1864.8 1424.4 1860.7 1424.8 1856.7 1425.2 1853.0 1425.5 1849.6 1425.6 1846.1 1425.8 1842.7 1425.8 1839.1 1425.9 1835.5 1425.9 1831.8 1426.0 1828.0 1426.1 1828.0 1462.3 1831.7 1462.2 1835.2 1462.2 1838.9 1462.1 1842.7 1462.1 1846.6 1462.0 1850.7 1461.8 1855.0 1461.6 1859.3 1461.2 1863.6 1460.8 1868.0 1460.4 1872.6 1459.9 1877.4 1459.4 1882.3 1458.7 1887.3 1457.9 1892.4 1456.9 1897.4 1455.7 1902.4 1454.3 1907.3 1452.8 1912.1 1451.2 1917.0 1449.4 1921.8 1447.6 1926.6 1445.5 1931.4 1443.4 1936.1 1441.1 1940.7 1438.7 1945.2 1436.2 1949.7 1433.5 1954.0 1430.8 1958.2 1428.0 1962.4 1425.2 1966.4 1422.3 1970.4 1419.4 1974.4 1416.5 1978.4 1413.6 1982.4 1410.5 1986.4 1407.4 1990.4 1404.2 1994.4 1400.8 1998.3 1397.3 2002.0 1393.8 2005.4 1390.6 2008.6 1387.7 2012.0 1384.6 2015.5 1381.1 2019.2 1377.1 2023.1 1372.4 2027.1 1366.9 2031.3 1360.6 2035.8 1353.4 2040.7 1345.3 2045.9 1336.4 2051.2 1327.0 2056.4 1317.2 2061.2 1307.4 2065.5 1297.6 2069.1 1288.1 2072.0 1279.2 2074.4 1270.6 2076.4 1262.1 2078.0 1253.6 2079.3 1244.9 2080.2 1235.9 2080.9 1226.6 2081.3 1216.8 2081.5 1206.4 2081.6 1195.7 2081.4 1184.6 2080.9 1173.2 2080.1 1161.6 2078.9 1150.0 2077.2 1138.3 2075.1 1126.9 2072.6 1115.5 2069.9 1104.0 2067.0 1092.4 2063.6 1080.7 2059.7 1069.1 2055.3 1057.7 2050.2 1046.5 2044.5 1035.8 2038.3 1025.3 2031.7 1014.6 2024.5 1003.9 2016.8 993.3 2008.4 983.3 1999.3 973.9 1989.1 965.6 1977.7 958.3 1964.6 952.7 1950.0 948.6 1934.9 945.7 1919.8 943.6 1905.2 942.0 1891.8 940.8 1880.4 939.7 1871.4 938.5 1864.5 937.4 1859.2 936.7 1855.3 936.3 1852.5 936.1 1850.7 936.0 1849.1 935.8 1846.5 935.4 1842.1 934.5 1836.4 933.1 1829.9 931.6 1822.9 929.8 1815.4 927.8 1807.6 925.7 1799.7 923.5 1791.7 921.3 1783.8 919.2 1776.3 917.1 1769.1 914.8 1761.6 912.4 1753.9 910.0 1745.7 907.5 1736.8 905.0 1727.0 902.6 1716.3 900.2 1704.1 897.9 1690.3 895.6 1675.7 893.4 1660.7 891.1 1646.0 889.0 1632.1 887.0 1619.7 885.1 1609.4 883.4 1601.0 881.9 1593.9 880.5 1588.0 879.3 1582.9 878.2 1578.5 877.1 1574.3 876.1 1570.2 875.0 1566.0 873.8 1561.8 872.6 1558.0 871.6 1554.6 870.5 1551.5 869.5 1548.7 868.4 1546.1 867.4 1543.6 866.3 1541.3 865.1 1539.0 863.8 1537.0 862.5 1535.1 861.2 1533.4 859.8 1531.8 858.3 1530.3 856.8 1528.9 855.3 1527.6 853.6 1526.5 851.9 1525.5 850.1 1524.5 848.2 1523.7 846.3 1523.0 844.3 1522.5 842.2 1522.0 840.0 1521.6 837.7 1521.3 835.3 1521.0 832.7 1520.9 830.1 1520.9 827.5 1521.0 824.8 1521.2 822.2 1521.7 819.6 1522.3 817.1 1523.1 814.6 1524.1 812.0 1525.2 809.5 1526.5 807.0 1527.9 804.4 1529.5 801.9 1531.3 799.3 1533.3 796.7 1535.6 794.0 1538.1 791.2 1540.7 788.4 1543.6 785.6 1546.5 782.9 1549.5 780.3 1552.6 777.8 1555.9 775.5 1559.4 773.2 1562.7 770.9 1565.8 768.9 1568.9 767.1 1572.1 765.4 1575.7 763.9 1579.9 762.4 1584.9 761.0 1591.0 759.6 1598.2 758.2 1606.2 756.9 1614.7 755.6 1623.6 754.5 1632.5 753.5 1641.3 752.6 1649.8 751.9 1658.1 751.3 1666.3 750.7 1674.5 750.3 1682.7 750.0 1690.8 749.9 1698.9 749.9 1707.1 750.1 1715.2 750.5 1723.6 751.1 1732.3 752.0 1741.1 753.0 1750.0 754.3 1758.8 755.6 1767.3 757.1 1775.3 758.7 1782.8 760.4 1789.8 762.1 1796.4 763.9 1802.6 765.8 1808.5 767.9 1814.1 770.0 1819.4 772.3 1824.5 774.7 1829.2 777.3 1833.6 780.1 1838.0 783.4 1842.2 787.1 1846.3 791.1 1850.2 795.0 1853.8 798.8 1857.2 802.3 1860.2 805.2 1862.6 807.4 1864.2 808.9 1865.3 809.9 1866.1 810.7 1866.7 811.3 1867.3 812.0 1868.1 812.7 1869.1 813.7Z" fill-rule="nonzero"/><path id="ls" d="M1886.7 814.8 1885.8 813.9 1885.2 813.3 1884.6 812.7 1883.8 812.0 1882.9 811.1 1881.6 809.9 1879.9 808.3 1877.7 806.3 1875.0 803.7 1871.7 800.5 1868.0 796.7 1863.9 792.6 1859.4 788.3 1854.5 784.2 1849.3 780.2 1843.6 776.7 1837.9 773.6 1832.1 770.8 1826.0 768.2 1819.6 765.8 1813.0 763.5 1806.1 761.4 1798.9 759.5 1791.3 757.6 1783.3 755.9 1774.8 754.2 1765.9 752.6 1756.7 751.2 1747.4 749.9 1738.1 748.9 1728.9 748.0 1719.9 747.3 1711.1 746.8 1702.4 746.6 1693.7 746.6 1685.0 746.8 1676.4 747.1 1667.9 747.5 1659.4 748.0 1650.9 748.7 1642.2 749.4 1633.1 750.3 1623.8 751.4 1614.6 752.6 1605.5 753.9 1596.9 755.3 1588.7 756.8 1581.2 758.6 1574.5 760.5 1568.4 762.6 1563.0 764.9 1558.2 767.3 1554.0 769.7 1550.2 772.2 1546.6 774.6 1543.0 777.0 1539.1 779.8 1535.2 782.8 1531.6 785.8 1528.1 789.0 1524.8 792.2 1521.8 795.4 1518.9 798.5 1516.3 801.6 1513.8 804.7 1511.6 807.7 1509.6 810.8 1507.8 813.9 1506.2 817.0 1504.8 820.0 1503.6 823.1 1502.5 826.2 1501.7 829.3 1501.1 832.5 1500.7 835.7 1500.5 838.9 1500.4 841.9 1500.5 844.9 1500.7 847.8 1501.0 850.6 1501.4 853.3 1501.9 855.9 1502.6 858.5 1503.4 861.0 1504.4 863.5 1505.5 865.9 1506.8 868.3 1508.3 870.5 1509.9 872.7 1511.7 874.9 1513.6 876.9 1515.8 878.9 1518.1 880.8 1520.6 882.6 1523.3 884.4 1526.2 886.1 1529.2 887.7 1532.4 889.2 1535.8 890.6 1539.3 891.9 1542.9 893.1 1546.8 894.3 1550.9 895.6 1555.3 896.8 1559.7 898.0 1564.0 899.2 1568.5 900.4 1573.4 901.6 1578.9 902.8 1585.2 904.1 1592.7 905.6 1601.5 907.2 1612.3 909.1 1625.1 911.0 1639.2 913.1 1654.0 915.3 1669.0 917.6 1683.5 919.9 1696.8 922.2 1708.4 924.4 1718.4 926.6 1727.4 928.9 1735.7 931.3 1743.6 933.7 1751.1 936.2 1758.7 938.6 1766.4 941.1 1774.4 943.4 1782.5 945.7 1790.6 947.9 1798.6 950.1 1806.6 952.3 1814.3 954.4 1821.6 956.3 1828.5 958.0 1834.8 959.5 1840.0 960.6 1844.0 961.3 1847.4 961.7 1850.0 961.9 1852.3 962.1 1855.1 962.3 1859.6 962.9 1866.6 964.1 1876.7 965.4 1888.9 966.7 1902.2 967.9 1916.2 969.4 1930.1 971.4 1943.1 973.9 1954.5 977.2 1963.7 981.2 1971.7 986.4 1979.6 993.1 1987.2 1001.1 1994.5 1010.1 2001.4 1019.8 2007.9 1030.0 2014.0 1040.3 2019.7 1050.3 2024.7 1060.1 2029.1 1070.2 2032.9 1080.6 2036.3 1091.4 2039.2 1102.3 2041.8 1113.4 2044.1 1124.5 2046.2 1135.4 2048.0 1146.1 2049.3 1156.8 2050.2 1167.6 2050.7 1178.4 2051.0 1189.0 2050.9 1199.5 2050.6 1209.7 2050.2 1219.5 2049.7 1228.6 2048.9 1237.1 2047.9 1245.0 2046.6 1252.6 2045.0 1260.0 2043.1 1267.3 2040.8 1274.8 2038.2 1282.5 2034.9 1290.5 2031.0 1299.0 2026.4 1307.7 2021.5 1316.5 2016.4 1325.2 2011.3 1333.4 2006.5 1341.0 2002.2 1347.5 1998.6 1352.8 1995.5 1356.9 1992.7 1360.2 1990.0 1363.0 1987.3 1365.6 1984.4 1368.2 1981.1 1371.0 1977.6 1374.2 1974.2 1377.3 1970.8 1380.2 1967.4 1383.0 1963.9 1385.8 1960.4 1388.5 1956.8 1391.1 1953.1 1393.8 1949.4 1396.4 1945.6 1399.0 1941.9 1401.6 1938.2 1404.0 1934.5 1406.4 1930.8 1408.6 1927.2 1410.8 1923.5 1412.7 1919.9 1414.6 1916.1 1416.4 1912.2 1418.1 1908.3 1419.7 1904.3 1421.2 1900.4 1422.6 1896.4 1423.9 1892.4 1425.0 1888.6 1426.1 1884.8 1426.9 1881.0 1427.7 1877.0 1428.3 1873.0 1428.8 1868.9 1429.3 1864.8 1429.7 1860.7 1430.1 1856.8 1430.5 1853.1 1430.8 1849.7 1430.9 1846.3 1431.1 1842.8 1431.1 1839.3 1431.2 1835.7 1431.2 1832.0 1431.3 1828.2 1431.4 1828.2 1467.3 1831.8 1467.2 1835.4 1467.1 1839.1 1467.1 1842.8 1467.0 1846.7 1467.0 1850.8 1466.8 1855.1 1466.6 1859.4 1466.2 1863.7 1465.8 1868.0 1465.4 1872.6 1464.9 1877.3 1464.4 1882.2 1463.7 1887.2 1462.9 1892.3 1461.9 1897.3 1460.7 1902.2 1459.4 1907.1 1457.9 1911.9 1456.3 1916.8 1454.5 1921.6 1452.7 1926.3 1450.7 1931.0 1448.6 1935.7 1446.3 1940.3 1443.9 1944.9 1441.4 1949.3 1438.7 1953.6 1436.0 1957.8 1433.3 1961.9 1430.5 1965.9 1427.6 1969.9 1424.8 1973.9 1421.9 1977.9 1419.0 1981.8 1416.0 1985.8 1412.9 1989.8 1409.6 1993.7 1406.3 1997.6 1402.8 2001.4 1399.3 2004.7 1396.2 2007.9 1393.3 2011.2 1390.2 2014.8 1386.8 2018.5 1382.8 2022.3 1378.1 2026.3 1372.7 2030.5 1366.4 2034.9 1359.3 2039.8 1351.2 2045.0 1342.4 2050.3 1333.1 2055.4 1323.5 2060.2 1313.7 2064.5 1304.0 2068.1 1294.6 2071.0 1285.7 2073.4 1277.2 2075.4 1268.8 2077.0 1260.3 2078.2 1251.7 2079.2 1242.8 2079.8 1233.5 2080.2 1223.8 2080.5 1213.5 2080.5 1202.8 2080.3 1191.8 2079.9 1180.5 2079.0 1169.0 2077.8 1157.5 2076.2 1145.9 2074.0 1134.5 2071.6 1123.2 2068.9 1111.8 2066.0 1100.2 2062.6 1088.6 2058.8 1077.1 2054.4 1065.8 2049.3 1054.7 2043.6 1044.0 2037.4 1033.6 2030.9 1022.9 2023.8 1012.2 2016.1 1001.7 2007.7 991.7 1998.6 982.4 1988.5 974.0 1977.2 966.8 1964.1 961.2 1949.6 957.1 1934.6 954.2 1919.6 952.1 1905.0 950.5 1891.7 949.3 1880.3 948.2 1871.4 947.0 1864.6 945.9 1859.3 945.2 1855.3 944.8 1852.6 944.6 1850.8 944.5 1849.2 944.3 1846.6 943.9 1842.3 943.0 1836.6 941.6 1830.1 940.0 1823.1 938.2 1815.7 936.3 1808.0 934.2 1800.0 932.0 1792.1 929.8 1784.2 927.7 1776.8 925.6 1769.6 923.3 1762.2 920.9 1754.5 918.5 1746.3 916.0 1737.4 913.5 1727.7 911.1 1717.1 908.7 1704.9 906.4 1691.2 904.1 1676.7 901.9 1661.8 899.6 1647.1 897.5 1633.3 895.5 1621.0 893.6 1610.7 891.9 1602.3 890.4 1595.3 889.0 1589.4 887.8 1584.3 886.7 1579.9 885.6 1575.8 884.6 1571.7 883.5 1567.5 882.3 1563.3 881.1 1559.6 880.1 1556.2 879.0 1553.1 878.0 1550.3 876.9 1547.7 875.9 1545.2 874.8 1542.9 873.6 1540.7 872.3 1538.6 871.0 1536.8 869.7 1535.1 868.3 1533.5 866.8 1532.0 865.3 1530.6 863.8 1529.4 862.1 1528.2 860.4 1527.2 858.6 1526.3 856.7 1525.5 854.8 1524.8 852.8 1524.2 850.7 1523.7 848.5 1523.3 846.2 1523.0 843.8 1522.8 841.2 1522.6 838.6 1522.6 836.0 1522.7 833.3 1523.0 830.7 1523.4 828.1 1524.0 825.6 1524.8 823.1 1525.8 820.5 1526.9 818.0 1528.2 815.5 1529.6 812.9 1531.2 810.4 1533.0 807.8 1535.0 805.2 1537.3 802.5 1539.7 799.7 1542.4 796.9 1545.2 794.1 1548.1 791.4 1551.1 788.8 1554.2 786.3 1557.5 784.0 1560.9 781.7 1564.2 779.4 1567.3 777.4 1570.4 775.6 1573.6 773.9 1577.2 772.4 1581.3 770.9 1586.3 769.5 1592.4 768.1 1599.5 766.7 1607.5 765.4 1616.0 764.1 1624.8 763.0 1633.7 762.0 1642.5 761.1 1650.9 760.4 1659.1 759.8 1667.3 759.2 1675.5 758.8 1683.6 758.5 1691.7 758.4 1699.8 758.4 1707.9 758.6 1716.0 759.0 1724.3 759.6 1732.9 760.5 1741.8 761.5 1750.6 762.8 1759.4 764.1 1767.8 765.6 1775.8 767.2 1783.2 768.9 1790.2 770.6 1796.7 772.4 1802.9 774.3 1808.8 776.4 1814.4 778.5 1819.7 780.8 1824.7 783.2 1829.4 785.8 1833.8 788.6 1838.1 791.9 1842.4 795.6 1846.4 799.6 1850.3 803.5 1853.9 807.3 1857.3 810.8 1860.3 813.7 1862.6 815.9 1864.2 817.4 1865.3 818.4 1866.1 819.2 1866.7 819.8 1867.3 820.5 1868.1 821.2 1869.1 822.2Z" fill-rule="nonzero"/>
<path id="mt" d="M1868.9 813.7 1869.9 812.7 1870.7 812.0 1871.3 811.3 1871.9 810.7 1872.7 809.9 1873.8 808.9 1875.4 807.4 1877.8 805.2 1880.8 802.3 1884.2 798.8 1887.8 795.0 1891.7 791.1 1895.8 787.1 1900.0 783.4 1904.4 780.1 1908.8 777.3 1913.5 774.7 1918.6 772.3 1923.9 770.0 1929.5 767.9 1935.4 765.8 1941.6 763.9 1948.2 762.1 1955.2 760.4 1962.7 758.7 1970.7 757.1 1979.2 755.6 1988.0 754.3 1996.9 753.0 2005.7 752.0 2014.4 751.1 2022.8 750.5 2030.9 750.1 2039.1 749.9 2047.2 749.9 2055.3 750.0 2063.5 750.3 2071.7 750.7 2079.9 751.3 2088.2 751.9 2096.7 752.6 2105.5 753.5 2114.4 754.5 2123.3 755.6 2131.8 756.9 2139.8 758.2 2147.0 759.6 2153.1 761.0 2158.1 762.4 2162.3 763.9 2165.9 765.4 2169.1 767.1 2172.2 768.9 2175.3 770.9 2178.6 773.2 2182.1 775.5 2185.4 777.8 2188.5 780.3 2191.5 782.9 2194.4 785.6 2197.3 788.4 2199.9 791.2 2202.4 794.0 2204.7 796.7 2206.7 799.3 2208.5 801.9 2210.1 804.4 2211.5 807.0 2212.8 809.5 2213.9 812.0 2214.9 814.6 2215.7 817.1 2216.3 819.6 2216.8 822.2 2217.0 824.8 2217.1 827.5 2217.1 830.1 2217.0 832.7 2216.7 835.3 2216.4 837.7 2216.0 840.0 2215.5 842.2 2215.0 844.3 2214.3 846.3 2213.5 848.2 2212.5 850.1 2211.5 851.9 2210.4 853.6 2209.1 855.3 2207.7 856.8 2206.2 858.3 2204.6 859.8 2202.9 861.2 2201.0 862.5 2199.0 863.8 2196.7 865.1 2194.4 866.3 2191.9 867.4 2189.3 868.4 2186.5 869.5 2183.4 870.5 2180.0 871.6 2176.2 872.6 2172.0 873.8 2167.8 875.0 2163.7 876.1 2159.5 877.1 2155.1 878.2 2150.0 879.3 2144.1 880.5 2137.0 881.9 2128.6 883.4 2118.3 885.1 2105.9 887.0 2092.0 889.0 2077.3 891.1 2062.3 893.4 2047.7 895.6 2033.9 897.9 2021.7 900.2 2011.0 902.6 2001.2 905.0 1992.3 907.5 1984.1 910.0 1976.4 912.4 1968.9 914.8 1961.7 917.1 1954.2 919.2 1946.3 921.3 1938.3 923.5 1930.4 925.7 1922.6 927.8 1915.1 929.8 1908.1 931.6 1901.6 933.1 1895.9 934.5 1891.5 935.4 1888.9 935.8 1887.3 936.0 1885.5 936.1 1882.7 936.3 1878.8 936.7 1873.5 937.4 1866.6 938.5 1857.6 939.7 1846.2 940.8 1832.8 942.0 1818.2 943.6 1803.1 945.7 1788.0 948.6 1773.4 952.7 1760.3 958.3 1748.9 965.6 1738.7 973.9 1729.6 983.3 1721.2 993.3 1713.5 1003.9 1706.3 1014.6 1699.7 1025.3 1693.5 1035.8 1687.8 1046.5 1682.7 1057.7 1678.3 1069.1 1674.4 1080.7 1671.0 1092.4 1668.1 1104.0 1665.4 1115.5 1662.9 1126.9 1660.8 1138.3 1659.1 1150.0 1657.9 1161.6 1657.1 1173.2 1656.6 1184.6 1656.4 1195.7 1656.5 1206.4 1656.7 1216.8 1657.1 1226.6 1657.8 1235.9 1658.7 1244.9 1660.0 1253.6 1661.6 1262.1 1663.6 1270.6 1666.0 1279.2 1668.9 1288.1 1672.5 1297.6 1676.8 1307.4 1681.6 1317.2 1686.8 1327.0 1692.1 1336.4 1697.3 1345.3 1702.2 1353.4 1706.7 1360.6 1710.9 1366.9 1714.9 1372.4 1718.8 1377.1 1722.5 1381.1 1726.0 1384.6 1729.4 1387.7 1732.6 1390.6 1736.0 1393.8 1739.7 1397.3 1743.6 1400.8 1747.6 1404.2 1751.6 1407.4 1755.6 1410.5 1759.6 1413.6 1763.6 1416.5 1767.6 1419.4 1771.6 1422.3 1775.6 1425.2 1779.8 1428.0 1784.0 1430.8 1788.3 1433.5 1792.8 1436.2 1797.3 1438.7 1801.9 1441.1 1806.6 1443.4 1811.4 1445.5 1816.2 1447.6 1821.0 1449.4 1825.9 1451.2 1830.7 1452.8 1835.6 1454.3 1840.6 1455.7 1845.6 1456.9 1850.7 1457.9 1855.7 1458.7 1860.6 1459.4 1865.4 1459.9 1870.0 1460.4 1874.4 1460.8 1878.7 1461.2 1883.0 1461.6 1887.3 1461.8 1891.4 1462.0 1895.3 1462.1 1899.1 1462.1 1902.8 1462.2 1906.3 1462.2 1910.0 1462.3 1910.0 1426.1 1906.2 1426.0 1902.5 1425.9 1898.9 1425.9 1895.3 1425.8 1891.9 1425.8 1888.4 1425.6 1885.0 1425.5 1881.3 1425.2 1877.3 1424.8 1873.2 1424.4 1869.1 1424.0 1865.0 1423.5 1860.9 1423.0 1857.0 1422.3 1853.1 1421.6 1849.3 1420.7 1845.5 1419.7 1841.5 1418.5 1837.5 1417.2 1833.5 1415.8 1829.5 1414.3 1825.6 1412.7 1821.7 1411.0 1817.9 1409.2 1814.2 1407.3 1810.5 1405.3 1806.9 1403.1 1803.2 1400.9 1799.5 1398.5 1795.8 1396.0 1792.0 1393.4 1788.2 1390.8 1784.5 1388.2 1780.8 1385.5 1777.2 1382.8 1773.6 1380.1 1770.1 1377.3 1766.7 1374.5 1763.3 1371.6 1759.8 1368.4 1756.3 1365.2 1753.0 1362.3 1750.1 1359.7 1747.4 1357.1 1744.7 1354.3 1741.9 1351.0 1738.7 1346.8 1735.1 1341.5 1730.8 1334.9 1725.9 1327.3 1720.9 1319.0 1715.7 1310.3 1710.8 1301.4 1706.2 1292.6 1702.2 1284.0 1699.0 1275.9 1696.3 1268.2 1694.0 1260.6 1692.1 1253.2 1690.5 1245.8 1689.2 1238.2 1688.2 1230.2 1687.4 1221.7 1686.9 1212.5 1686.4 1202.6 1686.2 1192.3 1686.1 1181.8 1686.3 1171.0 1686.9 1160.2 1687.8 1149.3 1689.1 1138.5 1690.9 1127.7 1693.0 1116.8 1695.3 1105.6 1698.0 1094.5 1700.9 1083.5 1704.3 1072.6 1708.1 1062.1 1712.5 1052.0 1717.6 1042.2 1723.3 1032.1 1729.4 1021.7 1736.0 1011.5 1742.9 1001.8 1750.2 992.7 1757.8 984.7 1765.8 978.0 1773.8 972.7 1783.0 968.7 1794.5 965.5 1807.6 962.9 1821.5 961.0 1835.6 959.5 1849.0 958.2 1861.3 957.0 1871.4 955.6 1878.5 954.5 1882.9 953.9 1885.8 953.6 1888.1 953.4 1890.7 953.2 1894.1 952.9 1898.2 952.2 1903.4 951.0 1909.7 949.6 1916.6 947.8 1924.0 945.9 1931.7 943.8 1939.7 941.7 1947.8 939.4 1956.0 937.2 1964.1 934.9 1972.1 932.6 1979.9 930.1 1987.4 927.7 1995.1 925.2 2002.9 922.8 2011.3 920.4 2020.4 918.1 2030.4 915.9 2042.0 913.7 2055.5 911.4 2070.0 909.1 2085.1 906.8 2100.0 904.6 2114.1 902.5 2126.9 900.6 2137.8 898.7 2146.7 897.1 2154.2 895.6 2160.6 894.3 2166.1 893.1 2171.0 891.9 2175.5 890.7 2179.9 889.5 2184.3 888.3 2188.7 887.1 2192.8 885.8 2196.7 884.6 2200.4 883.4 2203.9 882.1 2207.3 880.7 2210.5 879.2 2213.6 877.6 2216.5 875.9 2219.2 874.1 2221.7 872.3 2224.0 870.4 2226.2 868.4 2228.1 866.4 2229.9 864.2 2231.5 862.0 2233.0 859.8 2234.3 857.4 2235.5 855.0 2236.4 852.5 2237.2 850.0 2237.9 847.4 2238.4 844.8 2238.8 842.1 2239.1 839.3 2239.3 836.4 2239.4 833.4 2239.4 830.4 2239.2 827.2 2238.8 824.0 2238.2 820.8 2237.3 817.7 2236.2 814.6 2235.0 811.5 2233.6 808.5 2232.0 805.4 2230.2 802.3 2228.2 799.2 2226.0 796.2 2223.5 793.1 2220.9 790.0 2218.0 786.9 2214.9 783.7 2211.6 780.5 2208.1 777.3 2204.5 774.3 2200.6 771.3 2196.7 768.5 2193.0 766.1 2189.4 763.7 2185.6 761.2 2181.3 758.8 2176.5 756.4 2171.1 754.1 2165.0 752.0 2158.2 750.1 2150.7 748.3 2142.5 746.8 2133.8 745.4 2124.7 744.1 2115.4 742.9 2106.1 741.8 2097.0 740.9 2088.2 740.2 2079.7 739.5 2071.1 739.0 2062.5 738.6 2053.9 738.3 2045.2 738.1 2036.5 738.1 2027.7 738.3 2018.8 738.8 2009.8 739.5 2000.6 740.4 1991.2 741.4 1981.9 742.7 1972.6 744.1 1963.7 745.7 1955.1 747.4 1947.1 749.1 1939.5 751.0 1932.2 752.9 1925.3 755.0 1918.6 757.3 1912.3 759.7 1906.1 762.3 1900.2 765.1 1894.5 768.2 1888.8 771.7 1883.5 775.7 1878.6 779.8 1874.1 784.1 1870.0 788.2 1866.2 792.0 1863.0 795.2 1860.3 797.8 1858.1 799.8 1856.3 801.4 1855.0 802.6 1854.1 803.5 1853.3 804.2 1852.7 804.8 1852.1 805.4 1851.2 806.3Z" fill-rule="nonzero"/><path id="ms" d="M1868.9 822.2 1869.9 821.2 1870.7 820.5 1871.3 819.8 1871.9 819.2 1872.7 818.4 1873.8 817.4 1875.4 815.9 1877.7 813.7 1880.7 810.8 1884.1 807.3 1887.7 803.5 1891.6 799.6 1895.6 795.6 1899.9 791.9 1904.2 788.6 1908.6 785.8 1913.3 783.2 1918.3 780.8 1923.6 778.5 1929.2 776.4 1935.1 774.3 1941.3 772.4 1947.8 770.6 1954.8 768.9 1962.2 767.2 1970.2 765.6 1978.6 764.1 1987.4 762.8 1996.2 761.5 2005.1 760.5 2013.7 759.6 2022.0 759.0 2030.1 758.6 2038.2 758.4 2046.3 758.4 2054.4 758.5 2062.5 758.8 2070.7 759.2 2078.9 759.8 2087.1 760.4 2095.5 761.1 2104.3 762.0 2113.2 763.0 2122.0 764.1 2130.5 765.4 2138.5 766.7 2145.6 768.1 2151.7 769.5 2156.7 770.9 2160.8 772.4 2164.4 773.9 2167.6 775.6 2170.7 777.4 2173.8 779.4 2177.1 781.7 2180.5 784.0 2183.8 786.3 2186.9 788.8 2189.9 791.4 2192.8 794.1 2195.6 796.9 2198.3 799.7 2200.7 802.5 2203.0 805.2 2205.0 807.8 2206.8 810.4 2208.4 812.9 2209.8 815.5 2211.1 818.0 2212.2 820.5 2213.2 823.1 2214.0 825.6 2214.6 828.1 2215.0 830.7 2215.3 833.3 2215.4 836.0 2215.4 838.6 2215.2 841.2 2215.0 843.8 2214.7 846.2 2214.3 848.5 2213.8 850.7 2213.2 852.8 2212.5 854.8 2211.7 856.7 2210.8 858.6 2209.8 860.4 2208.6 862.1 2207.4 863.8 2206.0 865.3 2204.5 866.8 2202.9 868.3 2201.2 869.7 2199.4 871.0 2197.3 872.3 2195.1 873.6 2192.8 874.8 2190.3 875.9 2187.7 876.9 2184.9 878.0 2181.8 879.0 2178.4 880.1 2174.7 881.1 2170.5 882.3 2166.3 883.5 2162.2 884.6 2158.1 885.6 2153.7 886.7 2148.6 887.8 2142.7 889.0 2135.7 890.4 2127.3 891.9 2117.0 893.6 2104.7 895.5 2090.9 897.5 2076.2 899.6 2061.3 901.9 2046.8 904.1 2033.1 906.4 2020.9 908.7 2010.3 911.1 2000.6 913.5 1991.7 916.0 1983.5 918.5 1975.8 920.9 1968.4 923.3 1961.2 925.6 1953.8 927.7 1945.9 929.8 1938.0 932.0 1930.0 934.2 1922.3 936.3 1914.9 938.2 1907.9 940.0 1901.4 941.6 1895.7 943.0 1891.4 943.9 1888.8 944.3 1887.2 944.5 1885.4 944.6 1882.7 944.8 1878.7 945.2 1873.4 945.9 1866.6 947.0 1857.7 948.2 1846.3 949.3 1833.0 950.5 1818.4 952.1 1803.4 954.2 1788.4 957.1 1773.9 961.2 1760.8 966.8 1749.5 974.0 1739.4 982.4 1730.3 991.7 1721.9 1001.7 1714.2 1012.2 1707.1 1022.9 1700.6 1033.6 1694.4 1044.0 1688.7 1054.7 1683.6 1065.8 1679.2 1077.1 1675.4 1088.6 1672.0 1100.2 1669.1 1111.8 1666.4 1123.2 1664.0 1134.5 1661.8 1145.9 1660.2 1157.5 1659.0 1169.0 1658.1 1180.5 1657.7 1191.8 1657.5 1202.8 1657.5 1213.5 1657.8 1223.8 1658.2 1233.5 1658.8 1242.8 1659.8 1251.7 1661.0 1260.3 1662.6 1268.8 1664.6 1277.2 1667.0 1285.7 1669.9 1294.6 1673.5 1304.0 1677.8 1313.7 1682.6 1323.5 1687.7 1333.1 1693.0 1342.4 1698.2 1351.2 1703.1 1359.3 1707.5 1366.4 1711.7 1372.7 1715.7 1378.1 1719.5 1382.8 1723.2 1386.8 1726.8 1390.2 1730.1 1393.3 1733.3 1396.2 1736.6 1399.3 1740.4 1402.8 1744.3 1406.3 1748.2 1409.6 1752.2 1412.9 1756.2 1416.0 1760.1 1419.0 1764.1 1421.9 1768.1 1424.8 1772.1 1427.6 1776.1 1430.5 1780.2 1433.3 1784.4 1436.0 1788.7 1438.7 1793.1 1441.4 1797.7 1443.9 1802.3 1446.3 1807.0 1448.6 1811.7 1450.7 1816.4 1452.7 1821.2 1454.5 1826.1 1456.3 1830.9 1457.9 1835.8 1459.4 1840.7 1460.7 1845.7 1461.9 1850.8 1462.9 1855.8 1463.7 1860.7 1464.4 1865.4 1464.9 1870.0 1465.4 1874.3 1465.8 1878.6 1466.2 1882.9 1466.6 1887.2 1466.8 1891.3 1467.0 1895.2 1467.0 1898.9 1467.1 1902.6 1467.1 1906.2 1467.2 1909.8 1467.3 1909.8 1431.4 1906.0 1431.3 1902.3 1431.2 1898.7 1431.2 1895.2 1431.1 1891.7 1431.1 1888.3 1430.9 1884.9 1430.8 1881.2 1430.5 1877.3 1430.1 1873.2 1429.7 1869.1 1429.3 1865.0 1428.8 1861.0 1428.3 1857.0 1427.7 1853.2 1426.9 1849.4 1426.1 1845.6 1425.0 1841.6 1423.9 1837.6 1422.6 1833.7 1421.2 1829.7 1419.7 1825.8 1418.1 1821.9 1416.4 1818.1 1414.6 1814.5 1412.7 1810.8 1410.8 1807.2 1408.6 1803.5 1406.4 1799.8 1404.0 1796.1 1401.6 1792.4 1399.0 1788.6 1396.4 1784.9 1393.8 1781.2 1391.1 1777.6 1388.5 1774.1 1385.8 1770.6 1383.0 1767.2 1380.2 1763.8 1377.3 1760.4 1374.2 1756.9 1371.0 1753.6 1368.2 1750.7 1365.6 1748.0 1363.0 1745.3 1360.2 1742.5 1356.9 1739.4 1352.8 1735.8 1347.5 1731.5 1341.0 1726.7 1333.4 1721.6 1325.2 1716.5 1316.5 1711.6 1307.7 1707.0 1299.0 1703.1 1290.5 1699.8 1282.5 1697.2 1274.8 1694.9 1267.3 1693.0 1260.0 1691.4 1252.6 1690.1 1245.0 1689.1 1237.1 1688.3 1228.6 1687.8 1219.5 1687.4 1209.7 1687.1 1199.5 1687.0 1189.0 1687.3 1178.4 1687.8 1167.6 1688.7 1156.8 1690.0 1146.1 1691.8 1135.4 1693.9 1124.5 1696.2 1113.4 1698.8 1102.3 1701.7 1091.4 1705.1 1080.6 1708.9 1070.2 1713.3 1060.1 1718.3 1050.3 1724.0 1040.3 1730.1 1030.0 1736.6 1019.8 1743.5 1010.1 1750.8 1001.1 1758.4 993.1 1766.3 986.4 1774.3 981.2 1783.5 977.2 1794.9 973.9 1807.9 971.4 1821.8 969.4 1835.8 967.9 1849.1 966.7 1861.3 965.4 1871.4 964.1 1878.4 962.9 1882.9 962.3 1885.7 962.1 1888.0 961.9 1890.6 961.7 1894.0 961.3 1898.0 960.6 1903.2 959.5 1909.5 958.0 1916.4 956.3 1923.7 954.4 1931.4 952.3 1939.4 950.1 1947.4 947.9 1955.5 945.7 1963.6 943.4 1971.6 941.1 1979.3 938.6 1986.9 936.2 1994.4 933.7 2002.3 931.3 2010.6 928.9 2019.6 926.6 2029.6 924.4 2041.2 922.2 2054.5 919.9 2069.0 917.6 2084.0 915.3 2098.8 913.1 2112.9 911.0 2125.7 909.1 2136.5 907.2 2145.3 905.6 2152.8 904.1 2159.1 902.8 2164.6 901.6 2169.5 900.4 2174.0 899.2 2178.3 898.0 2182.7 896.8 2187.1 895.6 2191.2 894.3 2195.1 893.1 2198.7 891.9 2202.2 890.6 2205.6 889.2 2208.8 887.7 2211.8 886.1 2214.7 884.4 2217.4 882.6 2219.9 880.8 2222.2 878.9 2224.4 876.9 2226.3 874.9 2228.1 872.7 2229.7 870.5 2231.2 868.3 2232.5 865.9 2233.6 863.5 2234.6 861.0 2235.4 858.5 2236.1 855.9 2236.6 853.3 2237.0 850.6 2237.3 847.8 2237.5 844.9 2237.6 841.9 2237.5 838.9 2237.3 835.7 2236.9 832.5 2236.3 829.3 2235.5 826.2 2234.4 823.1 2233.2 820.0 2231.8 817.0 2230.2 813.9 2228.4 810.8 2226.4 807.7 2224.2 804.7 2221.7 801.6 2219.1 798.5 2216.2 795.4 2213.2 792.2 2209.9 789.0 2206.4 785.8 2202.8 782.8 2198.9 779.8 2195.0 777.0 2191.4 774.6 2187.8 772.2 2184.0 769.7 2179.8 767.3 2175.0 764.9 2169.6 762.6 2163.5 760.5 2156.8 758.6 2149.3 756.8 2141.1 755.3 2132.5 753.9 2123.4 752.6 2114.2 751.4 2104.9 750.3 2095.8 749.4 2087.1 748.7 2078.6 748.0 2070.1 747.5 2061.6 747.1 2053.0 746.8 2044.3 746.6 2035.6 746.6 2026.9 746.8 2018.1 747.3 2009.1 748.0 1999.9 748.9 1990.6 749.9 1981.3 751.2 1972.1 752.6 1963.2 754.2 1954.7 755.9 1946.7 757.6 1939.1 759.5 1931.9 761.4 1925.0 763.5 1918.4 765.8 1912.0 768.2 1905.9 770.8 1900.1 773.6 1894.4 776.7 1888.7 780.2 1883.5 784.2 1878.6 788.3 1874.1 792.6 1870.0 796.7 1866.3 800.5 1863.0 803.7 1860.3 806.3 1858.1 808.3 1856.4 809.9 1855.1 811.1 1854.2 812.0 1853.4 812.7 1852.8 813.3 1852.2 813.9 1851.3 814.8Z" fill-rule="nonzero"/>
</defs>
<use href="#rs" fill="#ffffff" stroke="#ffffff" stroke-width="7.5" stroke-linejoin="round"/><use href="#rt" fill="#ffffff" stroke="#ffffff" stroke-width="7.5" stroke-linejoin="round"/>
<use href="#bs" fill="#ffffff" stroke="#ffffff" stroke-width="7.5" stroke-linejoin="round" clip-path="url(#ringclip)"/><use href="#bt" fill="#ffffff" stroke="#ffffff" stroke-width="7.5" stroke-linejoin="round" clip-path="url(#ringclip)"/>
<use href="#ls" fill="#ffffff" stroke="#ffffff" stroke-width="7.5" stroke-linejoin="round" clip-path="url(#clipL)"/><use href="#lt" fill="#ffffff" stroke="#ffffff" stroke-width="7.5" stroke-linejoin="round" clip-path="url(#clipL)"/>
<use href="#ms" fill="#ffffff" stroke="#ffffff" stroke-width="7.5" stroke-linejoin="round" clip-path="url(#clipR)"/><use href="#mt" fill="#ffffff" stroke="#ffffff" stroke-width="7.5" stroke-linejoin="round" clip-path="url(#clipR)"/>
<use href="#rs" fill="#5b5636"/>
<use href="#bs" fill="#5b5636" clip-path="url(#ringclip)"/>
<use href="#ls" fill="#5b5636" clip-path="url(#clipL)"/>
<use href="#ms" fill="#5b5636" clip-path="url(#clipR)"/>
<use href="#rt" fill="#908a45"/>
<use href="#bt" fill="#908a45" clip-path="url(#ringclip)"/>
<use href="#lt" fill="#908a45" clip-path="url(#clipL)"/>
<use href="#mt" fill="#908a45" clip-path="url(#clipR)"/>
<g clip-path="url(#bedclip)">
<use href="#bs" fill="#8c8444" clip-path="url(#ringclip)"/>
<use href="#ls" fill="#8c8444" clip-path="url(#clipL)"/>
<use href="#ms" fill="#8c8444" clip-path="url(#clipR)"/>
<use href="#bt" fill="#c3b955" clip-path="url(#ringclip)"/>
<use href="#lt" fill="#c3b955" clip-path="url(#clipL)"/>
<use href="#mt" fill="#c3b955" clip-path="url(#clipR)"/>
</g>
<text x="2051" y="1056.5" font-family="Liberation Sans" font-weight="bold" font-size="11" fill="#0ca33f">01</text>
<path d="M1689,1048 L1687.5,1033" stroke="#1a2aa8" stroke-width="1.5"/><path d="M1691,1046 L1692.5,1030" stroke="#2ab02a" stroke-width="1.5"/><path d="M1722,1058 L1731,1061 L1722,1063Z" fill="#d42020"/>
<path d="M1588.5,826 L1588.5,849 L1594,844.5 L1598.8,855 L1601.8,853.8 L1597.5,843.8 L1604.5,843.3Z" fill="#000" stroke="#fff" stroke-width="2.6" stroke-linejoin="round"/></svg>
<div class="r" style="left:975px;top:72px;width:1868px;height:100px;background:#f9f9f9;"></div>
<div class="r" style="left:859px;top:72px;width:39px;height:39px;background:#f8f8f8;"></div>
<svg class="s" style="left:0px;top:0px;" width="2880" height="1800" viewBox="0 0 2880 1800"><path d="M41.3,16.5 L21.5,35.5 L25.6,37.5 L25.6,54.5 Q25.6,56.2 27.3,56.2 L36.7,56.2 L36.7,42 L45,42 L45,56.2 L53.7,56.2 Q55.4,56.2 55.4,54.5 L55.4,37.5 L59.5,35.5 Z" fill="#fff" stroke="#fff" stroke-width="1.5" stroke-linejoin="round"/>
<g fill="none" stroke="#fff" stroke-width="1.9" stroke-linejoin="round"><path d="M135.9,20.7 L151.2,28.9 L151.2,44.6 L135.9,52 L120.3,44.6 L120.3,28.9 Z"/><path d="M120.3,28.9 L135.9,37.2 L151.2,28.9"/></g>
<g fill="none" stroke="#fff" stroke-width="1.9" stroke-linejoin="round" stroke-linecap="round"><path d="M407.1,28.6 L422,21.2 L437.3,28.6 L422,36.8 Z"/><path d="M409,35.5 L407.1,36.8 L422,44.5 L437.3,36.8 L435.4,35.5"/><path d="M409,42.5 L407.1,43.6 L422,51 L437.3,43.6 L435.4,42.5"/></g>
<g fill="none" stroke="#fff" stroke-width="1.9"><rect x="701" y="21.2" width="17.1" height="9.6"/><path d="M709.5,30.8 V34.6 M705.5,34.6 H714"/><path d="M726.3,21.2 H734.5 V30"/><path d="M702.5,42 V50.6 H711.4"/><rect x="721" y="37" width="14" height="14"/><path d="M727.8,37 V42.5 M726,46.8 H729.5"/></g>
<g fill="none" stroke="#fff" stroke-width="1.9"><rect x="966.7" y="20.5" width="32.9" height="30.4" rx="1.5"/><path d="M979.8,27.6 H993.4 M979.8,35.8 H993.4 M979.8,44.1 H993.4" stroke-linecap="round"/></g><g fill="#fff"><circle cx="974.4" cy="27.6" r="1.2"/><circle cx="974.4" cy="35.8" r="1.2"/><circle cx="974.4" cy="44.1" r="1.2"/></g>
<path d="M1219.8,23.9 L1224.0,23.9 L1224.3,27.0 L1226.3,27.8 L1228.8,25.9 L1231.7,28.8 L1229.8,31.3 L1230.6,33.3 L1233.7,33.6 L1233.7,37.8 L1230.6,38.1 L1229.8,40.1 L1231.7,42.6 L1228.8,45.5 L1226.3,43.6 L1224.3,44.4 L1224.0,47.5 L1219.8,47.5 L1219.5,44.4 L1217.5,43.6 L1215.0,45.5 L1212.1,42.6 L1214.0,40.1 L1213.2,38.1 L1210.1,37.8 L1210.1,33.6 L1213.2,33.3 L1214.0,31.3 L1212.1,28.8 L1215.0,25.9 L1217.5,27.8 L1219.5,27.0Z" fill="none" stroke="#fff" stroke-width="1.9" stroke-linejoin="round"/>
<path d="M1221.5,31.5 L1216.3,37 L1219.8,37 L1219.8,41.8 L1223.2,41.8 L1223.2,37 L1226.7,37 Z" fill="#fff"/>
<g fill="none" stroke="#76736f" stroke-width="1.4"><circle cx="1871.1" cy="34.9" r="15.6"/><circle cx="1871.1" cy="34.9" r="10.4"/><circle cx="1870.6" cy="34.9" r="4.8"/><circle cx="1862.6" cy="29.6" r="2.3"/><circle cx="1883.5" cy="43.3" r="2.7"/><circle cx="1874.5" cy="37.5" r="1.2"/></g>
<path d="M1918.5,22.8 H1930.6 V35.9 H1943.5 V48.3 H1918.5 Z" fill="#50ac54" stroke="#fff" stroke-width="1.6" stroke-linejoin="round"/><path d="M1930.6,35.9 V48.3" stroke="#fff" stroke-width="1.6"/><rect x="1935" y="21.6" width="9.7" height="9.3" fill="#a97cf7"/>
<path d="M2033.3,33.8 L2042,39.7 L2050.5,33.8" fill="none" stroke="#fff" stroke-width="2.2" stroke-linecap="round" stroke-linejoin="round"/>
<path d="M2425.3,33.8 L2434,39.7 L2442.5,33.8" fill="none" stroke="#fff" stroke-width="2.2" stroke-linecap="round" stroke-linejoin="round"/><g fill="none" stroke="#2f3639" stroke-width="2.3" stroke-linejoin="round">
<path d="M986.2,108.2 H1027.8 V150.1 H986.2 Z"/><path d="M986.2,108.2 L1005.9,88.1 H1047.4 L1027.8,108.2" stroke-width="2.8"/><path d="M1047.4,88.1 V120"/><path d="M1027.8,150.1 L1033,145"/>
<circle cx="1046.8" cy="134.6" r="14.6" fill="#f9f9f9"/><path d="M1046.8,124.5 V144.7 M1036.7,134.6 H1056.9" stroke-width="2"/>
<rect x="1078.2" y="90.2" width="57.8" height="57.6"/><path d="M1091.2,90.2 V147.8 M1103.6,90.2 V147.8 M1115.4,90.2 V147.8 M1127.4,90.2 V147.8 M1078.2,102 H1136 M1078.2,114 H1136 M1078.2,126.1 H1136 M1078.2,138.5 H1136" stroke-width="2"/>
<circle cx="1130.9" cy="138.5" r="14.5" fill="#f9f9f9"/><path d="M1130.9,128.5 V148.5 M1120.9,138.5 H1140.9" stroke-width="2"/>
<path d="M1198.6,91 L1234.8,101.3 L1224.5,137 L1188.7,126.8 Z"/><rect x="1173.2" y="145.8" width="59.1" height="6.8" rx="3.4"/><path d="M1186.7,117 Q1180,120 1177,125"/><path d="M1167.6,125.3 L1184.2,130.5 L1172.8,141.2 Z"/>
</g>
<text x="1166" y="109.8" font-family="Liberation Sans" font-weight="bold" font-size="11.5" fill="#2f3639" textLength="25.5" lengthAdjust="spacingAndGlyphs">AUTO</text>
<g fill="none" stroke="#2f3639" stroke-width="2.3" stroke-linejoin="round">
<rect x="1256" y="90.2" width="63" height="62.8"/><rect x="1263.7" y="96.4" width="49.2" height="18"/><rect x="1263.7" y="119.1" width="14.5" height="26.7"/><rect x="1282.3" y="119.1" width="30.6" height="10.8"/><rect x="1282.3" y="135" width="30.6" height="10.8"/>
<rect x="1348.4" y="96.8" width="55.2" height="3" rx="1.5" fill="#2f3639"/><rect x="1348.4" y="104.4" width="55.2" height="4.8" rx="1.5"/><rect x="1348.4" y="114" width="55.2" height="6" rx="1.5"/><rect x="1348.4" y="125.3" width="55.2" height="8.1" rx="1.5"/><rect x="1348.4" y="138.5" width="55.2" height="9.9" rx="1.5"/>
</g>
<rect x="1440" y="91" width="2" height="62" fill="#4f5659"/>
<g fill="none" stroke="#2f3639" stroke-width="2.3" stroke-linejoin="round">
<path transform="rotate(0 1512 121.7)" d="M1512,88.5 L1500.5,99.8 L1508.9,99.8 L1508.9,107.7 L1515.1,107.7 L1515.1,99.8 L1523.5,99.8 Z"/>
<path transform="rotate(90 1512 121.7)" d="M1512,88.5 L1500.5,99.8 L1508.9,99.8 L1508.9,107.7 L1515.1,107.7 L1515.1,99.8 L1523.5,99.8 Z"/>
<path transform="rotate(180 1512 121.7)" d="M1512,88.5 L1500.5,99.8 L1508.9,99.8 L1508.9,107.7 L1515.1,107.7 L1515.1,99.8 L1523.5,99.8 Z"/>
<path transform="rotate(270 1512 121.7)" d="M1512,88.5 L1500.5,99.8 L1508.9,99.8 L1508.9,107.7 L1515.1,107.7 L1515.1,99.8 L1523.5,99.8 Z"/>
<rect x="1508.4" y="118" width="7.4" height="7.4"/>
<path d="M1570,132.5 A28,28 0 0 1 1616,101"/><path d="M1599.4,107.7 L1623.2,131.5 L1599.4,154.5 L1576.4,131.5 Z"/><path d="M1612.9,109 L1626.1,95.3 L1632,114.3 Z"/>
<path d="M1656,118 V90.5 H1719 V152.7 H1690.7" stroke-dasharray="4.5 3.5"/><rect x="1656" y="118" width="34.7" height="34.7"/><path d="M1694,115 L1710,99.8 M1700,99.5 H1710.3 V109.8"/>
<path d="M1773.5,91.8 L1810.5,99.2 L1802.6,136.3 L1765.6,127.6 Z"/><rect x="1749.7" y="146" width="59" height="6.7" rx="3.3"/><path d="M1763,117.5 Q1757,119.5 1754,125"/><path d="M1744,125 L1760,129 L1748,141 Z"/>
<rect x="1835" y="90.5" width="58" height="26.5"/><rect x="1835" y="125" width="58" height="27"/><path d="M1835,121.3 H1893" stroke-dasharray="2.5 2" stroke-width="1.8"/>
<rect x="1919.5" y="107" width="46.3" height="46.5"/><rect x="1940" y="90" width="47" height="46.3"/>
<path d="M1944,110 L1940,114 M1952,110 L1940,122 M1960,110 L1940,130 M1962,116 L1946,132 M1962,124 L1954,132" stroke-width="1.5"/>
<path d="M2039,92.6 L2067,106 L2062,116.4 L2033.5,103.7 Z"/><rect x="2030" y="118" width="32" height="13.5" stroke-dasharray="2 2" stroke-width="1.8"/><rect x="2016" y="132" width="59" height="18.8"/><path d="M2033,104.5 Q2027,106 2023,112"/><path d="M2011,113 L2026,118.3 L2015.6,128 Z"/>
<path d="M2126.3,91 L2154,119.6 L2122.3,151.4 L2094.5,122.3 Z"/><path d="M2094.5,120.6 H2154"/><path d="M2144.8,146 Q2144.8,138 2154.4,126 Q2164,138 2164,146 Q2164,156 2154.4,156 Q2144.8,156 2144.8,146 Z"/>
</g>
<path d="M2103,89 L2125,111.7" stroke="#2f3639" stroke-width="4.5"/>
<g fill="none" stroke="#2f3639" stroke-width="2.3" stroke-linejoin="round">
<path d="M2186.3,90 H2234.8 V101 H2217.6 V152 H2203.5 V101 H2186.3 Z"/>
</g>
<text x="2224.5" y="152" font-family="Liberation Sans" font-weight="bold" font-size="45" fill="#f9f9f9" stroke="#2f3639" stroke-width="2.2" textLength="23" lengthAdjust="spacingAndGlyphs">a</text>
<g fill="none" stroke="#2f3639" stroke-width="2.3" stroke-linejoin="round">
<path d="M2274.4,90 H2335.8 V152 H2307.5 V117 H2274.4 Z"/><rect x="2278" y="117" width="22" height="35"/><path d="M2278,128 L2288,118 M2278,138 L2298,118 M2278,148 L2300,126 M2284,152 L2300,136 M2294,152 L2300,146" stroke-width="1.5"/>
<path d="M2362.5,110.4 H2404 V152 H2362.5 Z"/><path d="M2362.5,110.4 L2382.4,90 H2423.4 L2404,110.4 M2423.4,90 V132.8 L2404,152"/><path d="M2369,112 L2376,122 L2378,138 L2384,152" stroke-dasharray="1.8 2.2" stroke-width="1.8"/>
<circle cx="2460" cy="102.4" r="10"/>
<path d="M2453,105.4 L2463,95.4 M2456,110.4 L2468,98.4" stroke-width="1.5"/>
<circle cx="2500" cy="102.4" r="10"/>
<path d="M2493,105.4 L2503,95.4 M2496,110.4 L2508,98.4" stroke-width="1.5"/>
<circle cx="2460" cy="142" r="10"/>
<path d="M2453,145 L2463,135 M2456,150 L2468,138" stroke-width="1.5"/>
<circle cx="2500" cy="142" r="10"/>
<path d="M2493,145 L2503,135 M2496,150 L2508,138" stroke-width="1.5"/>
<rect x="2459.6" y="102.4" width="40.2" height="39.6" fill="#f9f9f9"/>
<path d="M2539,109.8 H2581.3 V153.5 H2539 Z"/><path d="M2539,109.8 L2558.8,89.7 H2601 L2581.3,109.8 M2601,89.7 V132.3 L2581.3,153.5"/>
<path d="M2541,118 q2.6,-3 5.2,0 t5.2,0 t5.2,0 t5.2,0 t5.2,0 t5.2,0 t5.2,0 M2541,127 q2.6,-3 5.2,0 t5.2,0 t5.2,0 t5.2,0 t5.2,0 t5.2,0 t5.2,0 M2541,136 q2.6,-3 5.2,0 t5.2,0 t5.2,0 t5.2,0 t5.2,0 t5.2,0 t5.2,0 M2541,145 q2.6,-3 5.2,0 t5.2,0 t5.2,0 t5.2,0 t5.2,0 t5.2,0 t5.2,0 " stroke-width="1.6"/>
<path d="M2584,118 l3,-3 l2,1 l3,-3 l2,1 l3,-3 l2,1 l3,-3 M2584,127 l3,-3 l2,1 l3,-3 l2,1 l3,-3 l2,1 l3,-3 M2584,136 l3,-3 l2,1 l3,-3 l2,1 l3,-3 l2,1 l3,-3 M2584,145 l3,-3 l2,1 l3,-3 l2,1 l3,-3 l2,1 l3,-3 " stroke-width="1.4"/>
</g>
<g fill="#2f3639"><circle cx="2625" cy="121.7" r="2.1"/><circle cx="2637.7" cy="121.7" r="2.1"/><circle cx="2650" cy="121.7" r="2.1"/></g>
<path d="M2666,117.5 L2676.5,127.5 L2687,117.5" fill="none" stroke="#2f3639" stroke-width="2.4"/>
<rect x="2720" y="91" width="2" height="62" fill="#4f5659"/>
<g fill="none" stroke="#2f3639" stroke-width="1.9" stroke-linejoin="round">
<path d="M2760.8,103.1 H2785.6 V109.6 A5.3,5.3 0 0 0 2785.6,120.2 V127.2 H2760.8 Z"/>
<path d="M2760.8,127.2 H2767.7 A5.2,5.2 0 0 0 2778,127.2 H2785.6 V134 A5.4,5.4 0 0 1 2785.6,145 V152.4 H2760.8 Z"/>
<path d="M2785.6,127.2 H2793 A5.2,5.2 0 0 1 2803.3,127.2 H2810.4 V152.4 H2785.6"/>
<path d="M2806.3,86.6 L2824.2,104.4 L2806.3,122 L2800.5,116.3 A5.4,5.4 0 0 0 2793.4,109.2 L2788.6,104.4 L2794,99 A5.3,5.3 0 0 1 2801,92 Z"/>
</g>
<path d="M873.5,85 L868,91.5 L873.5,98 M884,85 L889.5,91.5 L884,98 M878.8,83 V100" fill="none" stroke="#2f3639" stroke-width="1.8"/><g fill="none" stroke="#6b6b6b" stroke-width="1.7" stroke-linejoin="round"><path d="M22.3,93.4 H45 V117.4 H22.3 Z"/><path d="M22.3,93.4 L27.3,90.6 H53.7 L45,93.4 M53.7,90.6 V112.9 L45,117.4"/><path d="M38,93.4 V104 H45"/></g>
<path d="M27.5,110.8 L31.5,107.8 H43.3 V110.8 Z" fill="#50ac54"/>
<path d="M810.01,101.67 L810.01,106.33 L806.29,106.56 L805.08,109.47 L807.55,112.26 L804.26,115.55 L801.47,113.08 L798.56,114.29 L798.33,118.01 L793.67,118.01 L793.44,114.29 L790.53,113.08 L787.74,115.55 L784.45,112.26 L786.92,109.47 L785.71,106.56 L781.99,106.33 L781.99,101.67 L785.71,101.44 L786.92,98.53 L784.45,95.74 L787.74,92.45 L790.53,94.92 L793.44,93.71 L793.67,89.99 L798.33,89.99 L798.56,93.71 L801.47,94.92 L804.26,92.45 L807.55,95.74 L805.08,98.53 L806.29,101.44Z" fill="none" stroke="#2f3639" stroke-width="2.0" stroke-linejoin="round"/><circle cx="796" cy="104" r="4.3" fill="none" stroke="#2f3639" stroke-width="2.0"/>
<path d="M236.8,179 L257.8,181.5 L257.8,251.6 L236.8,254 Z" fill="#3e3e3e"/>
<rect x="174.2" y="177.9" width="62.6" height="76.1" fill="#3a3a3a" rx="1"/>
<rect x="177.9" y="188.4" width="51.4" height="59.6" fill="#141414"/>
<rect x="212" y="190" width="9" height="6" fill="none" stroke="#aaa" stroke-width="1"/><rect x="186" y="234" width="39" height="1.2" fill="#777"/><rect x="244" y="204" width="3" height="12" fill="#1a1a1a"/><rect x="224" y="214" width="6" height="4" fill="#999"/>
<path d="M404,145 H433.9 V179.8 Z" fill="#50ac54"/><path d="M417,155.5 L422,160 L430,151" fill="none" stroke="#fff" stroke-width="1.6"/>
<path d="M110.5,290.5 L119.75,299 L129,290.5" fill="none" stroke="#8c8c8c" stroke-width="1.6"/>
<defs><linearGradient id="gold" x1="0" y1="0" x2="1" y2="1"><stop offset="0" stop-color="#b99a5c"/><stop offset="0.6" stop-color="#d1b477"/><stop offset="1" stop-color="#c2a466"/></linearGradient></defs>
<path d="M496.2,176 H527.6 L529,174 H547 L548.3,176 H580.2 V264.8 H523 L521,262.5 H496.2 Z" fill="url(#gold)"/>
<g fill="none" stroke="#e2cf9e" stroke-width="0.8"><rect x="526.5" y="204.5" width="23" height="30.5"/><path d="M538,204.5 V235"/></g>
<circle cx="602" cy="176.7" r="11" fill="none" stroke="#555" stroke-width="1.8"/><path d="M602,174.5 V182 M599.5,182 H604.5 M600,174.5 H602" stroke="#444" stroke-width="1.8"/><circle cx="602" cy="170.8" r="1.3" fill="#444"/>
<path d="M460.7,292 L471.4,300.3 L482.1,292" fill="none" stroke="#8c8c8c" stroke-width="1.6"/>
<g fill="none" stroke="#2a3033" stroke-width="3.2"><path d="M721.5,205 A22.5,22.5 0 0 1 758,211"/><path d="M754,233 A22.5,22.5 0 0 1 717.5,228"/></g>
<path d="M766.5,208.5 L757,223 L750,207 Z" fill="#2a3033"/><path d="M708.5,230.5 L718,216 L725,232 Z" fill="#2a3033"/>
<path d="M796,378 H832 V413 Z" fill="#50ac54"/><path d="M812,389 L817,394 L826,385" fill="none" stroke="#fff" stroke-width="1.6"/>
<path d="M233,485 L243.5,493.5 L254,485" fill="none" stroke="#8c8c8c" stroke-width="1.4"/>
<path d="M531,485 L541.5,493.5 L552,485" fill="none" stroke="#8c8c8c" stroke-width="1.4"/>
<g fill="none" stroke-width="1.8"><path d="M31.6,582 Q23.6,584 23.8,596 Q24,608 31.6,608.5" stroke="#666"/><path d="M38.5,583.5 Q32,586 32.2,596 Q32.5,606 38.5,607" stroke="#3aa645"/><path d="M44.5,583.5 Q38,586 38.3,596 Q38.6,606 44.5,607" stroke="#3aa645"/><ellipse cx="48.4" cy="595.5" rx="3.7" ry="12.7" stroke="#666"/></g>
<path d="M609.8,595.9 H634.1 M621.9,584 V608 M666,595.9 H690" stroke="#2f3639" stroke-width="2.1"/>
<g fill="none" stroke="#2f3639" stroke-width="1.9"><rect x="719.3" y="582.2" width="27.4" height="25.8" rx="1.5"/><path d="M719.3,594.6 H746.7 M725,583 V594.6 M730.5,583 V594.6 M736,583 V594.6 M741.5,583 V594.6"/></g>
<circle cx="742.9" cy="602" r="9.3" fill="#f1f1f1" stroke="#2f3639" stroke-width="1.9"/><path d="M738,599.5 H747.5 L745,597 M747.5,604.5 H738 L740.5,607" fill="none" stroke="#2f3639" stroke-width="1.5"/>
<path d="M807.81,593.57 L807.81,598.23 L804.09,598.46 L802.88,601.37 L805.35,604.16 L802.06,607.45 L799.27,604.98 L796.36,606.19 L796.13,609.91 L791.47,609.91 L791.24,606.19 L788.33,604.98 L785.54,607.45 L782.25,604.16 L784.72,601.37 L783.51,598.46 L779.79,598.23 L779.79,593.57 L783.51,593.34 L784.72,590.43 L782.25,587.64 L785.54,584.35 L788.33,586.82 L791.24,585.61 L791.47,581.89 L796.13,581.89 L796.36,585.61 L799.27,586.82 L802.06,584.35 L805.35,587.64 L802.88,590.43 L804.09,593.34Z" fill="none" stroke="#2f3639" stroke-width="2.0" stroke-linejoin="round"/><circle cx="793.8" cy="595.9" r="4.3" fill="none" stroke="#2f3639" stroke-width="2.0"/>
<path d="M88.6,690 L99.44999999999999,699 L110.3,690" fill="none" stroke="#8c8c8c" stroke-width="1.4"/>
<rect x="128.7" y="680" width="21" height="28" fill="#262b2e"/><path d="M139.39999999999998,680 V708 M128.7,698.6 L139.39999999999998,695.3 L149.7,693" stroke="#fff" stroke-width="1.3" fill="none"/>
<path d="M508.6,690 L519.45,699 L530.3,690" fill="none" stroke="#8c8c8c" stroke-width="1.4"/>
<rect x="548.7" y="680" width="21" height="28" fill="#262b2e"/><path d="M559.4000000000001,680 V708 M548.7,698.6 L559.4000000000001,695.3 L569.7,693" stroke="#fff" stroke-width="1.3" fill="none"/>
<path d="M88.6,758 L99.44999999999999,767 L110.3,758" fill="none" stroke="#8c8c8c" stroke-width="1.4"/>
<rect x="128.7" y="748" width="21" height="28" fill="#262b2e"/><path d="M139.39999999999998,748 V776 M128.7,766.6 L139.39999999999998,763.3 L149.7,761" stroke="#fff" stroke-width="1.3" fill="none"/>
<circle cx="373.8" cy="694" r="13.5" fill="none" stroke="#2f3639" stroke-width="2.1"/><g fill="#2f3639"><circle cx="368.2" cy="694" r="1.4"/><circle cx="373.8" cy="694" r="1.4"/><circle cx="379.40000000000003" cy="694" r="1.4"/></g>
<circle cx="793.8" cy="694" r="13.5" fill="none" stroke="#2f3639" stroke-width="2.1"/><g fill="#2f3639"><circle cx="788.1999999999999" cy="694" r="1.4"/><circle cx="793.8" cy="694" r="1.4"/><circle cx="799.4" cy="694" r="1.4"/></g>
<circle cx="373.8" cy="762" r="13.5" fill="none" stroke="#2f3639" stroke-width="2.1"/><g fill="#2f3639"><circle cx="368.2" cy="762" r="1.4"/><circle cx="373.8" cy="762" r="1.4"/><circle cx="379.40000000000003" cy="762" r="1.4"/></g>
<g fill="none" stroke-width="1.9" stroke-linejoin="round"><path d="M23.5,856.8 L30.6,847.6 H53.7 L46.5,856.8 Z" stroke="#666"/><path d="M51,854 L53.7,855.6 L46.5,865.6 H23.5 L24,861" stroke="#3aa645"/><path d="M51,864 L53.7,865.6 L46.5,874.6 H23.5 L24,870" stroke="#666"/></g>
<g fill="#2f3639"><circle cx="725.7" cy="850.6" r="1.9"/><circle cx="725.7" cy="860" r="1.9"/><circle cx="725.7" cy="869.4" r="1.9"/></g><path d="M732.8,850.6 H751.3 M732.8,860 H751.3 M732.8,869.4 H751.3" stroke="#2f3639" stroke-width="2.4" stroke-linecap="round"/>
<g fill="none" stroke="#2f3639" stroke-width="2" stroke-linecap="round"><path d="M783.1,870.2 L804.6,849.4"/><path d="M779.9,852.2 H793.2 M786.8,846.4 L793.2,852.2 L786.8,858"/><path d="M795.3,867.3 H808.2 M801.6,861.5 L795.3,867.3 L801.6,873.4"/></g>
<path d="M88.6,935.5 L99.44999999999999,944.5 L110.3,935.5" fill="none" stroke="#8c8c8c" stroke-width="1.4"/>
<g fill="none" stroke="#2f3639" stroke-width="1.9" stroke-linejoin="round"><path d="M726.5,931.4 Q726.5,930.4 727.5,930.4 H741.8 L749.5,938.5 V952.3 Q749.5,953.3 748.5,953.3 H727.5 Q726.5,953.3 726.5,952.3 Z"/><path d="M730.7,930.4 V935.3 H737.9 V930.4"/><path d="M730.7,953.3 V947 H745.7 V953.3"/></g>
<circle cx="791" cy="939" r="10.4" fill="none" stroke="#2f3639" stroke-width="2"/><path d="M798.5,947 L809,957" stroke="#2f3639" stroke-width="2"/>
<g stroke="#2f3639" stroke-width="1.9" stroke-linejoin="round"><path d="M24.5,1103.1 L27.5,1097.1 H51 L54,1103.1 Z" fill="#b0b0b0"/><path d="M24.5,1097.1 L27.5,1091.5 H51 L54,1097.1 Z" fill="#fff"/><path d="M24.5,1091.5 L27.5,1085.9 H51 L54,1091.5 Z" fill="#b0b0b0"/><path d="M24.5,1085.9 L29.9,1076.9 H48.8 L54,1085.9 Z" fill="#fff"/></g>
<rect x="24.9" y="1282.8" width="29.9" height="8.4" rx="1.5" fill="#b0b0b0" stroke="#2f3639" stroke-width="1.9"/><path d="M25.3,1294.7 V1305.1 M53.8,1294.7 V1305.1 M25.3,1299.8 H53.8" stroke="#2f3639" stroke-width="1.9" stroke-linecap="round"/></svg>
<div class="r" style="left:2110px;top:1529px;width:750px;height:91px;background:#e04949;border-radius:9px;"></div>
<div class="t" style="left:2192.4px;top:1547.4px;font-size:25.3px;line-height:25.3px;color:#ffffff;font-weight:normal;">Fehler:</div>
<div class="t" style="left:2192.4px;top:1576.3px;font-size:26.2px;line-height:26.2px;color:#ffffff;font-weight:normal;">Folgende Objekte liegen über der Plattengrenze b..</div>
<div class="t" style="left:2797.0px;top:1576.3px;font-size:26.2px;line-height:26.2px;color:#8e2424;font-weight:normal;text-decoration:underline;">Mehr</div>
<div class="r" style="left:2110px;top:1630px;width:750px;height:149px;background:#ffffff;box-sizing:border-box;border:2px solid #1e9e3c;border-radius:9px;"></div>
<div class="r" style="left:2112px;top:1632px;width:16px;height:145px;background:#0b9529;border-radius:7px 0 0 7px;"></div>
<div class="t" style="left:2140.5px;top:1646.8px;font-size:25.8px;line-height:25.8px;color:#333333;font-weight:normal;">Objektname: logo (1) (1)</div>
<div class="t" style="left:2140.5px;top:1676.5px;font-size:25.8px;line-height:25.8px;color:#333333;font-weight:normal;">Größe: 832.991 x 840.482 x 10 mm</div>
<div class="t" style="left:2140.5px;top:1706.3px;font-size:25.8px;line-height:25.8px;color:#333333;font-weight:normal;">Volumen: 1.65019e+06 mm³</div>
<div class="t" style="left:2140.5px;top:1736.0px;font-size:25.8px;line-height:25.8px;color:#333333;font-weight:normal;">Dreiecke: 48476</div>
<div class="r" style="left:922px;top:1581px;width:128px;height:182px;background:#c5c5c5;"></div>
<div class="t" style="left:486.0px;width:1000px;text-align:center;top:1617.2px;font-size:19px;line-height:19px;color:#333333;font-weight:normal;letter-spacing:2px;">Oben</div>
<div class="t" style="left:486.0px;width:1000px;text-align:center;top:1707.5px;font-size:19px;line-height:19px;color:#333333;font-weight:normal;letter-spacing:2px;">Vorne</div>
<div class="r" style="left:1131px;top:1702px;width:73px;height:73px;background:#f8f8f8;border-radius:36.5px;"></div>
<svg class="s" style="left:0px;top:0px;" width="2880" height="1800" viewBox="0 0 2880 1800"><circle cx="2151.5" cy="1577" r="29" fill="#ffffff"/><path d="M2151.5,1563 V1580" stroke="#e04949" stroke-width="5.5" stroke-linecap="round"/><circle cx="2151.5" cy="1589.5" r="3.2" fill="#e04949"/>
<path d="M2825.5,1567 L2844,1584 M2844,1567 L2825.5,1584" stroke="#fff" stroke-width="2.6"/>
<circle cx="2818.5" cy="1669.5" r="25" fill="#f0eff0"/><path d="M2803.5,1654.5 L2833.5,1684.5 M2833.5,1654.5 L2803.5,1684.5" stroke="#9a9a9a" stroke-width="2.2"/>
<circle cx="2830" cy="1759.5" r="11" fill="#f3f3f3"/><path d="M2820,1759.5 H2840" stroke="#bdbdbd" stroke-width="1.8"/>
<path d="M922,1763 V1673" stroke="#7f80c4" stroke-width="3"/><path d="M916,1678 L922,1666.7 L928,1678 Z" fill="#7f80c4"/>
<path d="M922,1763 H1045" stroke="#c47f80" stroke-width="3"/><path d="M1044,1757 L1055,1763 L1044,1769 Z" fill="#c47f80"/>
<text x="916" y="1652.8" font-family="Liberation Sans" font-size="17" fill="#7f80c4">Z</text>
<text x="1081" y="1770.8" font-family="Liberation Sans" font-size="17" fill="#c47f80">X</text>
<path d="M922,1604 H1050 M922,1649 H1050" stroke="#cfcfcf" stroke-width="1"/>
<g fill="none" stroke="#6b6b6b" stroke-width="3" stroke-linecap="round"><path d="M1148.5,1727 V1722 Q1148.5,1717.5 1153,1717.5 H1158 M1177,1717.5 H1182 Q1186.5,1717.5 1186.5,1722 V1727 M1186.5,1748 V1753 Q1186.5,1757.5 1182,1757.5 H1177 M1158,1757.5 H1153 Q1148.5,1757.5 1148.5,1753 V1748"/><path d="M1167.5,1725 L1178,1731 V1743 L1167.5,1749 L1157,1743 V1731 Z M1157,1731 L1167.5,1737 L1178,1731 M1167.5,1737 V1749" stroke-linejoin="round"/></g></svg>
</body></html>
